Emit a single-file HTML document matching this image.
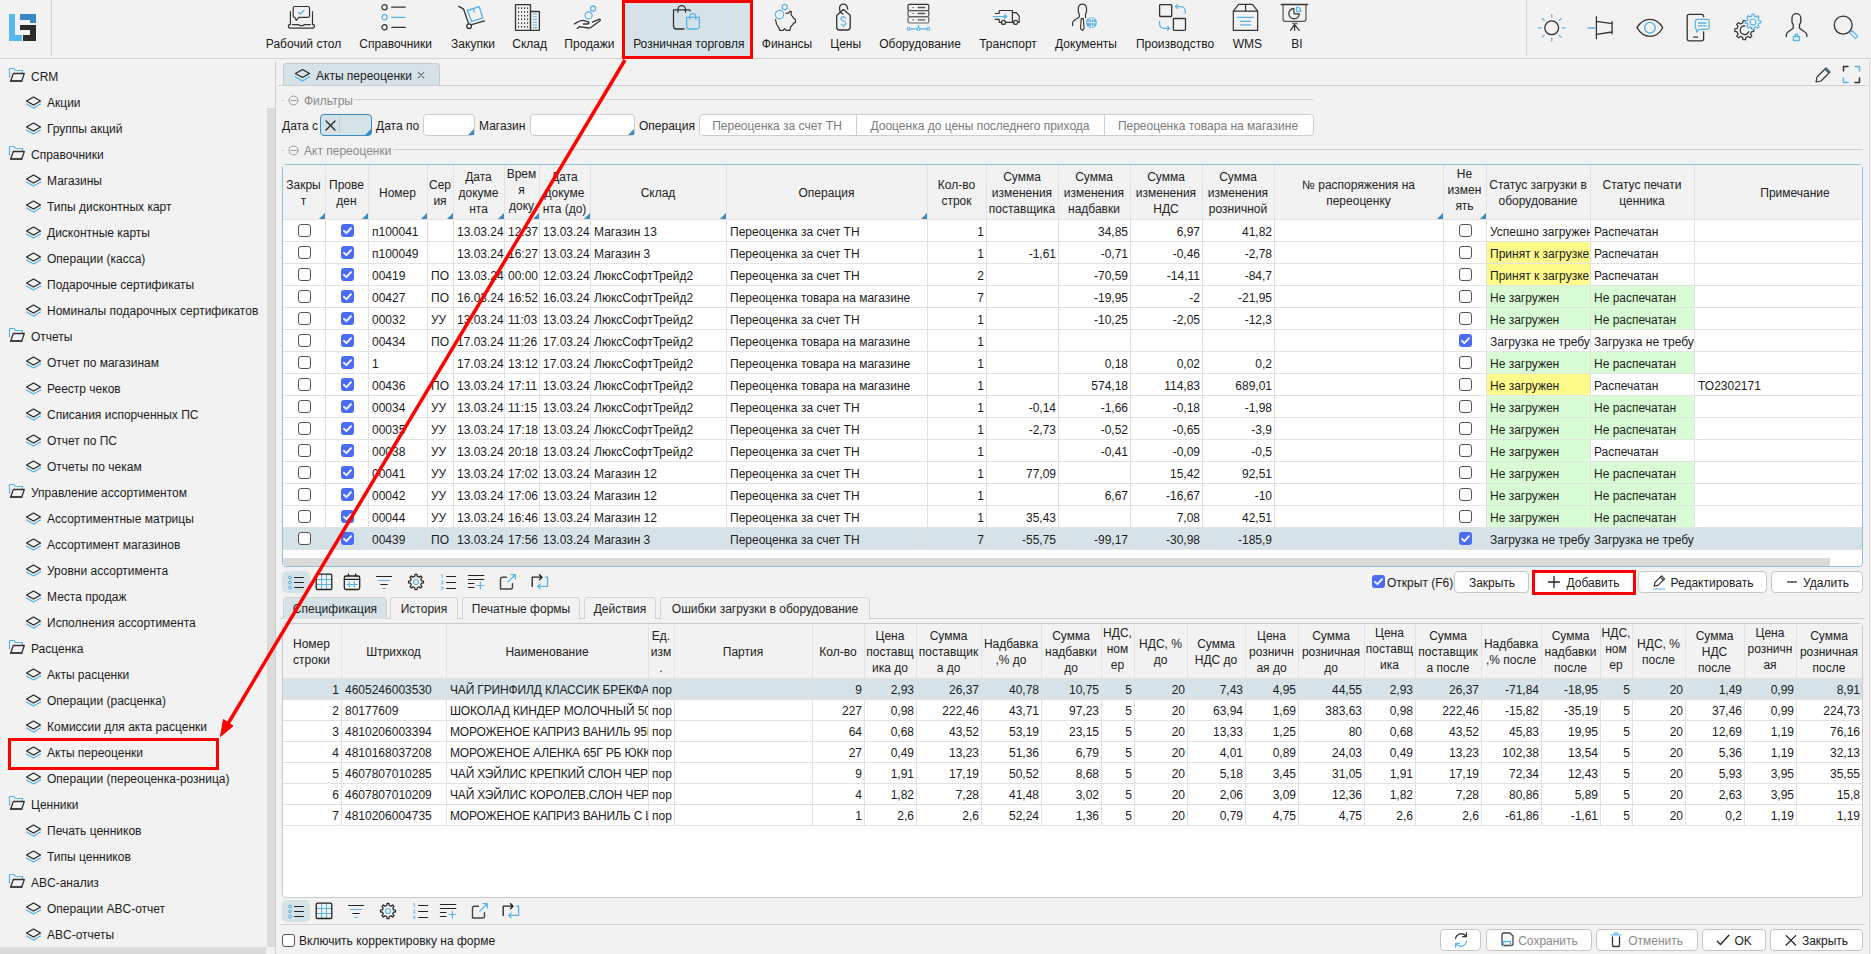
<!DOCTYPE html><html><head><meta charset="utf-8"><style>
*{margin:0;padding:0;box-sizing:border-box}
html,body{width:1871px;height:954px;overflow:hidden;background:#f2f2f2}
body{position:relative;font-family:"Liberation Sans",sans-serif;font-size:12px;color:#1c1c1c}
.a{position:absolute}
.t{position:absolute;white-space:nowrap;line-height:16px}
.c{position:absolute;white-space:nowrap;overflow:hidden;padding:0 0 0 3px}
.r{text-align:right;padding:0 2px 0 3px}
.ctr{text-align:center}
.hd{position:absolute;white-space:normal;text-align:center;line-height:16px;display:flex;align-items:center;justify-content:center;overflow:hidden;color:#222}
.cb{position:absolute;width:13px;height:13px;border:1px solid #555;border-radius:3px;background:#fff}
.cbc{position:absolute;width:13px;height:13px;border-radius:3px;background:#4a6cf7}
.btn{position:absolute;background:#fff;border:1px solid #c6c6c6;border-radius:4px;line-height:19px;text-align:center;white-space:nowrap}
</style></head><body><div class="a" style="left:0px;top:58px;width:1871px;height:1px;background:#d2d2d2"></div><div class="a" style="left:51px;top:0px;width:1px;height:56px;background:#d2d2d2"></div><div class="a" style="left:1526px;top:0px;width:1px;height:56px;background:#d2d2d2"></div><div class="a" style="left:9px;top:14px;width:6px;height:27px;background:#56b8f0"></div><div class="a" style="left:9px;top:35px;width:13px;height:6px;background:#56b8f0"></div><div class="a" style="left:20px;top:14px;width:16px;height:6px;background:#3a86c0"></div><div class="a" style="left:30px;top:20px;width:6px;height:3px;background:#3a86c0"></div><div class="a" style="left:20px;top:25px;width:16px;height:5px;background:#2b2b2b"></div><div class="a" style="left:30px;top:25px;width:6px;height:16px;background:#2b2b2b"></div><div class="a" style="left:23px;top:35px;width:13px;height:6px;background:#2b2b2b"></div><div class="a" style="left:622px;top:0px;width:131px;height:58px;background:#d5e3e8"></div><div class="t" style="left:103.5px;top:36px;width:400px;text-align:center;color:#1a1a1a">Рабочий стол</div><div class="t" style="left:195.60000000000002px;top:36px;width:400px;text-align:center;color:#1a1a1a">Справочники</div><div class="t" style="left:273.0px;top:36px;width:400px;text-align:center;color:#1a1a1a">Закупки</div><div class="t" style="left:329.70000000000005px;top:36px;width:400px;text-align:center;color:#1a1a1a">Склад</div><div class="t" style="left:389.4px;top:36px;width:400px;text-align:center;color:#1a1a1a">Продажи</div><div class="t" style="left:488.79999999999995px;top:36px;width:400px;text-align:center;color:#1a1a1a">Розничная торговля</div><div class="t" style="left:587.0px;top:36px;width:400px;text-align:center;color:#1a1a1a">Финансы</div><div class="t" style="left:645.7px;top:36px;width:400px;text-align:center;color:#1a1a1a">Цены</div><div class="t" style="left:720.0px;top:36px;width:400px;text-align:center;color:#1a1a1a">Оборудование</div><div class="t" style="left:808.0px;top:36px;width:400px;text-align:center;color:#1a1a1a">Транспорт</div><div class="t" style="left:886.0px;top:36px;width:400px;text-align:center;color:#1a1a1a">Документы</div><div class="t" style="left:975.0px;top:36px;width:400px;text-align:center;color:#1a1a1a">Производство</div><div class="t" style="left:1047.4px;top:36px;width:400px;text-align:center;color:#1a1a1a">WMS</div><div class="t" style="left:1096.8px;top:36px;width:400px;text-align:center;color:#1a1a1a">BI</div><svg class="a" style="left:284px;top:2px" width="36" height="30" viewBox="284 2 36 30" fill="none" stroke-linecap="round" stroke-linejoin="round"><g transform="translate(284 2)"><path d="M11 15.4h-0.3a1.5 1.5 0 0 1-1.5-1.5V6a1.5 1.5 0 0 1 1.5-1.5H24a1.5 1.5 0 0 1 1.5 1.5v7.9a1.5 1.5 0 0 1-1.5 1.5H14.8L12.2 18.4z" stroke="#333" stroke-width="1.2" /><path d="M14.5 10.4L16.4 12L20.1 8.3" stroke="#5ab4e8" stroke-width="1.3" /><path d="M6.4 9.6V22.6H5.4a1 1 0 0 0-1 1v0.5a2 2 0 0 0 2 2H28.4a2 2 0 0 0 2-2v-0.5a1 1 0 0 0-1-1H28.5V9.6" stroke="#333" stroke-width="1.2" /><path d="M8.5 22.6H15l1 1h3l1-1H26.4" stroke="#333" stroke-width="1.2" /></g></svg><svg class="a" style="left:378px;top:2px" width="32" height="30" viewBox="378 2 32 30" fill="none" stroke-linecap="round" stroke-linejoin="round"><path d="M384.5 7.2m-2.6 0a2.6 2.6 0 1 0 5.2 0a2.6 2.6 0 1 0-5.2 0" stroke="#333" stroke-width="1.2" /><path d="M384.5 17.3m-2.6 0a2.6 2.6 0 1 0 5.2 0a2.6 2.6 0 1 0-5.2 0" stroke="#5ab4e8" stroke-width="1.2" /><path d="M384.5 27.3m-2.6 0a2.6 2.6 0 1 0 5.2 0a2.6 2.6 0 1 0-5.2 0" stroke="#333" stroke-width="1.2" /><path d="M391.8 7.2H405.2" stroke="#333" stroke-width="1.3" /><path d="M391.8 17.3H405.2" stroke="#5ab4e8" stroke-width="1.3" /><path d="M391.8 27.3H405.2" stroke="#333" stroke-width="1.3" /></svg><svg class="a" style="left:454px;top:2px" width="36" height="30" viewBox="454 2 36 30" fill="none" stroke-linecap="round" stroke-linejoin="round"><g transform="translate(454 2)"><path d="M4.7 4.4L9.4 6.8L14.5 21.4" stroke="#333" stroke-width="1.3" /><circle cx="15.1" cy="24.2" r="2.3" stroke="#333" stroke-width="1.3"/><path d="M17.6 22.6L30.5 18.9" stroke="#333" stroke-width="1.3" /><path d="M13.5 8.5L25.2 4.6L28.8 15.9L17.6 19.7z" stroke="#5ab4e8" stroke-width="1.4" /><path d="M19.5 6.8L20.4 10.2" stroke="#5ab4e8" stroke-width="1.3" /></g></svg><svg class="a" style="left:510px;top:2px" width="36" height="30" viewBox="510 2 36 30" fill="none" stroke-linecap="round" stroke-linejoin="round"><g transform="translate(510 2)"><rect x="5.5" y="2.6" width="15" height="25.8" stroke="#333" stroke-width="1.3" rx="0.5"/><rect x="20.5" y="9.5" width="8.9" height="18.9" stroke="#333" stroke-width="1.3" rx="0.5"/><rect x="8.0" y="5.3" width="1.1" height="1.6" fill="#333"/><rect x="8.0" y="9.1" width="1.1" height="1.6" fill="#333"/><rect x="8.0" y="12.899999999999999" width="1.1" height="1.6" fill="#333"/><rect x="8.0" y="16.5" width="1.1" height="1.6" fill="#333"/><rect x="8.0" y="20.3" width="1.1" height="1.6" fill="#333"/><rect x="8.0" y="24.0" width="1.1" height="1.6" fill="#333"/><rect x="11.0" y="5.3" width="1.1" height="1.6" fill="#333"/><rect x="11.0" y="9.1" width="1.1" height="1.6" fill="#333"/><rect x="11.0" y="12.899999999999999" width="1.1" height="1.6" fill="#333"/><rect x="11.0" y="16.5" width="1.1" height="1.6" fill="#333"/><rect x="11.0" y="20.3" width="1.1" height="1.6" fill="#333"/><rect x="11.0" y="24.0" width="1.1" height="1.6" fill="#333"/><rect x="14.0" y="5.3" width="1.1" height="1.6" fill="#333"/><rect x="14.0" y="9.1" width="1.1" height="1.6" fill="#333"/><rect x="14.0" y="12.899999999999999" width="1.1" height="1.6" fill="#333"/><rect x="14.0" y="16.5" width="1.1" height="1.6" fill="#333"/><rect x="14.0" y="20.3" width="1.1" height="1.6" fill="#333"/><rect x="14.0" y="24.0" width="1.1" height="1.6" fill="#333"/><rect x="17.0" y="5.3" width="1.1" height="1.6" fill="#333"/><rect x="17.0" y="9.1" width="1.1" height="1.6" fill="#333"/><rect x="17.0" y="12.899999999999999" width="1.1" height="1.6" fill="#333"/><rect x="17.0" y="16.5" width="1.1" height="1.6" fill="#333"/><rect x="17.0" y="20.3" width="1.1" height="1.6" fill="#333"/><rect x="17.0" y="24.0" width="1.1" height="1.6" fill="#333"/><path d="M23.4 12H26.6" stroke="#5ab4e8" stroke-width="1.1" /><path d="M23.4 14.8H26.6" stroke="#5ab4e8" stroke-width="1.1" /><path d="M23.4 17.5H26.6" stroke="#5ab4e8" stroke-width="1.1" /><path d="M23.4 20.3H26.6" stroke="#5ab4e8" stroke-width="1.1" /><path d="M23.4 23H26.6" stroke="#5ab4e8" stroke-width="1.1" /><path d="M23.4 25.6H26.6" stroke="#5ab4e8" stroke-width="1.1" /></g></svg><svg class="a" style="left:570px;top:2px" width="36" height="30" viewBox="570 2 36 30" fill="none" stroke-linecap="round" stroke-linejoin="round"><g transform="translate(570 2)"><circle cx="23.1" cy="6.6" r="2.6" stroke="#5ab4e8" stroke-width="1.3"/><circle cx="18.6" cy="13.4" r="3.5" stroke="#5ab4e8" stroke-width="1.3"/><path d="M4.4 22C7.5 20 10 18.4 12.6 18.4C14.5 18.4 16 19.5 18.5 20C19.5 20.3 19 22 17.5 22H13.5" stroke="#333" stroke-width="1.3" /><path d="M22.3 20.1L28.9 17.3C30 17 30.8 18 30 18.8L20.8 25.5C20 26.1 19 26.2 18 26L9.6 24.6L7.2 26.4" stroke="#333" stroke-width="1.3" /></g></svg><svg class="a" style="left:668px;top:2px" width="36" height="30" viewBox="668 2 36 30" fill="none" stroke-linecap="round" stroke-linejoin="round"><g transform="translate(668 2)"><path d="M16 27H8.5a3 3 0 0 1-3-3V7.9H21.7L22.3 9" stroke="#333" stroke-width="1.3" /><path d="M9.9 10.2V7.5a3.8 3.8 0 0 1 7.6 0v2.7" stroke="#333" stroke-width="1.3" /><path d="M18.6 15.4H31.4V24a3 3 0 0 1-3 3H21.6a3 3 0 0 1-3-3z" stroke="#5ab4e8" stroke-width="1.3" /><path d="M21.8 17.2V14.6a3 3 0 0 1 6 0v2.6" stroke="#5ab4e8" stroke-width="1.3" /></g></svg><svg class="a" style="left:768px;top:2px" width="36" height="30" viewBox="768 2 36 30" fill="none" stroke-linecap="round" stroke-linejoin="round"><g transform="translate(768 2)"><circle cx="16.7" cy="5" r="2.6" stroke="#5ab4e8" stroke-width="1.2"/><circle cx="11.5" cy="12.6" r="4.2" stroke="#5ab4e8" stroke-width="1.2"/><path d="M7.5 17.6C7.6 20 8.2 22.6 11 26L11.6 28.3H15.1L16.7 26.7L18.2 28.3H22L22.6 25.2L25.8 21.1L27.4 20.4V17.3L25.8 16.4L23 12.6L23.3 9.7L22 9.4L20.1 11.3L17.9 11" stroke="#333" stroke-width="1.2" /></g></svg><svg class="a" style="left:826px;top:2px" width="36" height="30" viewBox="826 2 36 30" fill="none" stroke-linecap="round" stroke-linejoin="round"><g transform="translate(826 2)"><path d="M10.7 13.5L17.5 7.4L24.2 13.2V25.2a2.8 2.8 0 0 1-2.8 2.8H13.5a2.8 2.8 0 0 1-2.8-2.8z" stroke="#333" stroke-width="1.3" /><path d="M17.1 11.9C15 11.5 13.6 9.5 13.5 6.3C13.6 3.5 15.4 2.2 17.5 2.2C19.8 2.2 21.5 4.3 21.7 7.2" stroke="#333" stroke-width="1.3" /><path d="M19.5 16.2C19 15.2 18.2 14.8 17.3 14.8C16 14.8 15 15.6 15 16.8C15 19.5 19.8 18.5 19.8 21.3C19.8 22.5 18.8 23.4 17.4 23.4C16.4 23.4 15.6 23 15.2 22.3M17.5 14.2V15M17.5 23.4V24.6" stroke="#5ab4e8" stroke-width="1.2" /></g></svg><svg class="a" style="left:900px;top:2px" width="36" height="30" viewBox="900 2 36 30" fill="none" stroke-linecap="round" stroke-linejoin="round"><g transform="translate(900 2)"><rect x="8" y="2.3" width="20.8" height="6.3" rx="1.5" stroke="#333" stroke-width="1.2"/><rect x="8" y="8.5" width="20.8" height="6.1" rx="1.5" stroke="#555" stroke-width="1.2"/><rect x="8" y="14.6" width="20.8" height="6.4" rx="1.5" stroke="#666" stroke-width="1.2"/><path d="M13 5.5h0.5M13 11.5h0.5M13 17.8h0.5" stroke="#555" stroke-width="1.2" /><path d="M18.1 5.5H24.7M18.1 11.5H24.7M18.1 17.8H24.7" stroke="#555" stroke-width="1.3" /><path d="M10 26.9H17.1M19.9 26.9H27" stroke="#5ab4e8" stroke-width="1.1" /><path d="M18.5 23.3V25.5" stroke="#5ab4e8" stroke-width="1.1" /><circle cx="8.6" cy="26.9" r="1.4" stroke="#5ab4e8" stroke-width="1.1"/><circle cx="18.5" cy="26.9" r="1.4" stroke="#5ab4e8" stroke-width="1.1"/><circle cx="28.3" cy="26.9" r="1.4" stroke="#5ab4e8" stroke-width="1.1"/></g></svg><svg class="a" style="left:989px;top:2px" width="36" height="30" viewBox="989 2 36 30" fill="none" stroke-linecap="round" stroke-linejoin="round"><g transform="translate(989 2)"><path d="M6.3 11.5H10.1L10.4 8.5H23.4V20.4" stroke="#333" stroke-width="1.2" /><path d="M6.3 17.3H10.1L10.4 20.4H12.4M16.6 20.4H24.7M23.6 10.7H27.4L30.2 14.2V20.4H28.6" stroke="#333" stroke-width="1.2" /><circle cx="14.5" cy="20.4" r="2" stroke="#333" stroke-width="1.2"/><circle cx="26.6" cy="20.4" r="2" stroke="#333" stroke-width="1.2"/><path d="M4.4 14.6H16" stroke="#5ab4e8" stroke-width="1.4" /><path d="M15.7 12.4L18.3 14.6L15.7 16.8z" fill="#5ab4e8" stroke="#5ab4e8" stroke-width="0.8" stroke-linejoin="round"/></g></svg><svg class="a" style="left:1067px;top:2px" width="36" height="30" viewBox="1067 2 36 30" fill="none" stroke-linecap="round" stroke-linejoin="round"><g transform="translate(1067 2)"><path d="M18.5 15.4V12L19.5 10V5.9C19.5 3.7 17.6 2.2 15.4 2.2C13.2 2.2 11.3 3.7 11.3 5.9V10.4L12.3 12V15.1L11 16C8.5 17.5 5.7 18.8 5.6 21V23.6" stroke="#333" stroke-width="1.2" /><path d="M14.2 16.6L13.5 26.7L15.4 28.5L17 26.7L16.4 16.6z" stroke="#333" stroke-width="1.1" /><circle cx="24.5" cy="20.6" r="5.6" fill="#5ab4e8"/><path d="M19 20.6H30M24.5 15V26.2M21.5 16.5C23 17.5 26 17.5 27.5 16.5M21.5 24.7C23 23.7 26 23.7 27.5 24.7M22 20.6C22 18 23 16 24.5 15.2C26 16 27 18 27 20.6C27 23.2 26 25.2 24.5 26" stroke="#f2f2f2" stroke-width="0.7" /></g></svg><svg class="a" style="left:1155px;top:2px" width="36" height="30" viewBox="1155 2 36 30" fill="none" stroke-linecap="round" stroke-linejoin="round"><g transform="translate(1155 2)"><rect x="4.6" y="2.7" width="12.1" height="11.8" rx="0.8" stroke="#333" stroke-width="1.3"/><rect x="18.4" y="16.5" width="12.1" height="11.8" rx="0.8" stroke="#333" stroke-width="1.3"/><path d="M30.3 11.3V9A4.5 4.5 0 0 0 25.8 4.6H21M22.6 2.6L20.5 4.6L22.6 6.6" stroke="#5ab4e8" stroke-width="1.3" /><path d="M4.6 19.2V22A4.4 4.4 0 0 0 9 26.4H14M12.6 24.4L14.6 26.4L12.6 28.4" stroke="#5ab4e8" stroke-width="1.3" /></g></svg><svg class="a" style="left:1227px;top:2px" width="36" height="30" viewBox="1227 2 36 30" fill="none" stroke-linecap="round" stroke-linejoin="round"><g transform="translate(1227 2)"><path d="M6.3 9.1L11.6 2.4H25.5L30.7 9.1V28.3H6.3zM6.3 9.1H30.7M18.6 2.4V9.1" stroke="#333" stroke-width="1.2" /><path d="M10.4 15.4H26.6M13.4 19.3H23.7M13.4 22.8H23.7" stroke="#5ab4e8" stroke-width="1.3" /></g></svg><svg class="a" style="left:1276px;top:2px" width="36" height="30" viewBox="1276 2 36 30" fill="none" stroke-linecap="round" stroke-linejoin="round"><g transform="translate(1276 2)"><path d="M5.3 2.4H31.6" stroke="#333" stroke-width="1.5" /><path d="M7.1 2.8V17.3a2 2 0 0 0 2 2H28a2 2 0 0 0 2-2V2.8" stroke="#555" stroke-width="1.2" /><rect x="16" y="20.6" width="5.7" height="1.8" fill="#777"/><path d="M18.6 22.6L14.5 28.3M18.6 22.6L23.3 28.3M18.6 22.6V28.3" stroke="#333" stroke-width="1.2" /><path d="M17.8 6.3A5.3 5.3 0 1 0 23.4 11.8H18.1z" stroke="#333" stroke-width="1.2" /><path d="M20.6 5A4.3 4.3 0 0 1 24.9 9.3H20.6z" stroke="#5ab4e8" stroke-width="1.2" /></g></svg><svg class="a" style="left:1534px;top:10px" width="36" height="36" viewBox="1534 10 36 36" fill="none" stroke-linecap="round" stroke-linejoin="round"><circle cx="1551.7" cy="27.8" r="6.9" stroke="#333" stroke-width="1.3"/><path d="M1562.40 27.80L1564.90 27.80" stroke="#5ab4e8" stroke-width="1.3" /><path d="M1541.00 27.80L1538.50 27.80" stroke="#5ab4e8" stroke-width="1.3" /><path d="M1551.70 38.50L1551.70 41.00" stroke="#5ab4e8" stroke-width="1.3" /><path d="M1551.70 17.10L1551.70 14.60" stroke="#5ab4e8" stroke-width="1.3" /><path d="M1559.26 35.36L1561.03 37.13" stroke="#5ab4e8" stroke-width="1.3" /><path d="M1544.14 35.36L1542.37 37.13" stroke="#5ab4e8" stroke-width="1.3" /><path d="M1559.26 20.24L1561.03 18.47" stroke="#5ab4e8" stroke-width="1.3" /><path d="M1544.14 20.24L1542.37 18.47" stroke="#5ab4e8" stroke-width="1.3" /></svg><svg class="a" style="left:1584px;top:12px" width="32" height="32" viewBox="1584 12 32 32" fill="none" stroke-linecap="round" stroke-linejoin="round"><path d="M1596.4 16.7V38.7M1596.4 21.3L1612.1 23.7M1596.4 34.4L1612.1 32M1612.1 21.6V33.8" stroke="#333" stroke-width="1.3" /><path d="M1588 27.9H1594.5" stroke="#5ab4e8" stroke-width="1.5" /></svg><svg class="a" style="left:1632px;top:12px" width="34" height="32" viewBox="1632 12 34 32" fill="none" stroke-linecap="round" stroke-linejoin="round"><path d="M1636.9 27.7C1640 22.5 1645 19.4 1649.9 19.4C1654.8 19.4 1659.8 22.5 1662.8 27.7C1659.8 32.9 1654.8 36.4 1649.9 36.4C1645 36.4 1640 32.9 1636.9 27.7z" stroke="#333" stroke-width="1.3" /><circle cx="1649.9" cy="27.7" r="5.3" stroke="#5ab4e8" stroke-width="1.4"/></svg><svg class="a" style="left:1684px;top:12px" width="28" height="32" viewBox="1684 12 28 32" fill="none" stroke-linecap="round" stroke-linejoin="round"><path d="M1703.6 16.7V16.3a2 2 0 0 0-2-2H1689.2a2 2 0 0 0-2 2V38.8a2 2 0 0 0 2 2H1701.6a2 2 0 0 0 2-2V31.8" stroke="#333" stroke-width="1.3" /><path d="M1693.6 37.2H1697.6" stroke="#333" stroke-width="1.3" /><path d="M1697.3 19.4H1707.2a2 2 0 0 1 2 2V27.3a2 2 0 0 1-2 2H1699.2L1696.5 32.2V29.3a2 2 0 0 1-1.2-2V21.4a2 2 0 0 1 2-2z" stroke="#5ab4e8" stroke-width="1.2" /><path d="M1698.5 23H1706M1698.5 25.9H1706" stroke="#5ab4e8" stroke-width="1.4" /></svg><svg class="a" style="left:1729px;top:10px" width="36" height="36" viewBox="1729 10 36 36" fill="none" stroke-linecap="round" stroke-linejoin="round"><path d="M1751.52 28.59L1753.82 28.96L1753.82 31.44L1751.52 31.81L1750.55 34.16L1751.91 36.05L1750.15 37.81L1748.26 36.45L1745.91 37.42L1745.54 39.72L1743.06 39.72L1742.69 37.42L1740.34 36.45L1738.45 37.81L1736.69 36.05L1738.05 34.16L1737.08 31.81L1734.78 31.44L1734.78 28.96L1737.08 28.59L1738.05 26.24L1736.69 24.35L1738.45 22.59L1740.34 23.95L1742.69 22.98L1743.06 20.68L1745.54 20.68L1745.91 22.98L1748.26 23.95L1750.15 22.59L1751.91 24.35L1750.55 26.24z" stroke="#333" stroke-width="1.2" fill="#f2f2f2"/><path d="M1748.7 31.5A4.3 4.3 0 1 1 1744.9 25.9" stroke="#333" stroke-width="1.2" /><path d="M1758.76 20.61L1760.73 20.89L1760.73 22.91L1758.76 23.19L1757.98 25.06L1759.18 26.65L1757.75 28.08L1756.16 26.88L1754.29 27.66L1754.01 29.63L1751.99 29.63L1751.71 27.66L1749.84 26.88L1748.25 28.08L1746.82 26.65L1748.02 25.06L1747.24 23.19L1745.27 22.91L1745.27 20.89L1747.24 20.61L1748.02 18.74L1746.82 17.15L1748.25 15.72L1749.84 16.92L1751.71 16.14L1751.99 14.17L1754.01 14.17L1754.29 16.14L1756.16 16.92L1757.75 15.72L1759.18 17.15L1757.98 18.74z" stroke="#5ab4e8" stroke-width="1.2" fill="#f2f2f2"/><circle cx="1753" cy="21.9" r="2.9" stroke="#5ab4e8" stroke-width="1.2"/></svg><svg class="a" style="left:1782px;top:10px" width="32" height="36" viewBox="1782 10 32 36" fill="none" stroke-linecap="round" stroke-linejoin="round"><path d="M1786.3 36.5V35C1786.3 33.5 1787 32.5 1788 32L1793.2 28.3V24.4L1792 22.5V18.1A4.4 4.4 0 0 1 1800.8 18.1V22.5L1799.5 24.4V28.3L1804.8 32C1805.8 32.5 1806.9 33.5 1806.9 35V36.5" stroke="#333" stroke-width="1.3" /><path d="M1793.4 36.5H1799.5V40.5H1793.4z" stroke="#5ab4e8" stroke-width="1.3" /><path d="M1795.2 36.5V35a1.2 1.2 0 0 1 2.4 0V36.5" stroke="#5ab4e8" stroke-width="1.3" /></svg><svg class="a" style="left:1830px;top:12px" width="32" height="32" viewBox="1830 12 32 32" fill="none" stroke-linecap="round" stroke-linejoin="round"><circle cx="1843.2" cy="25.1" r="9" stroke="#333" stroke-width="1.3"/><path d="M1849.6 32.6L1851.8 30.4L1857.8 36.4L1855.6 38.6z" stroke="#5ab4e8" stroke-width="1.3" /></svg><svg class="a" style="left:8px;top:67px" width="18" height="16" viewBox="0 0 18 16" fill="none" stroke-linecap="round" stroke-linejoin="round"><path d="M1.5 10V1.5h4.5l1.5 2h7v2.5" stroke="#5ab4e8" stroke-width="1.2"/><path d="M5.3 6.5h11l-2.6 7.5h-11z" stroke="#333" stroke-width="1.3"/><path d="M2.7 14h11" stroke="#444" stroke-width="1.8"/></svg><div class="t" style="left:31px;top:69px;">CRM</div><svg class="a" style="left:24.5px;top:96px" width="17" height="14" viewBox="0 0 17 14" fill="none" stroke-linecap="round" stroke-linejoin="round"><path d="M8.5 1l7 4-7 4-7-4z" stroke="#222" stroke-width="1.2"/><path d="M1.5 8l7 4 7-4" stroke="#5ab4e8" stroke-width="1.4"/></svg><div class="t" style="left:47px;top:95px;">Акции</div><svg class="a" style="left:24.5px;top:122px" width="17" height="14" viewBox="0 0 17 14" fill="none" stroke-linecap="round" stroke-linejoin="round"><path d="M8.5 1l7 4-7 4-7-4z" stroke="#222" stroke-width="1.2"/><path d="M1.5 8l7 4 7-4" stroke="#5ab4e8" stroke-width="1.4"/></svg><div class="t" style="left:47px;top:121px;">Группы акций</div><svg class="a" style="left:8px;top:145px" width="18" height="16" viewBox="0 0 18 16" fill="none" stroke-linecap="round" stroke-linejoin="round"><path d="M1.5 10V1.5h4.5l1.5 2h7v2.5" stroke="#5ab4e8" stroke-width="1.2"/><path d="M5.3 6.5h11l-2.6 7.5h-11z" stroke="#333" stroke-width="1.3"/><path d="M2.7 14h11" stroke="#444" stroke-width="1.8"/></svg><div class="t" style="left:31px;top:147px;">Справочники</div><svg class="a" style="left:24.5px;top:174px" width="17" height="14" viewBox="0 0 17 14" fill="none" stroke-linecap="round" stroke-linejoin="round"><path d="M8.5 1l7 4-7 4-7-4z" stroke="#222" stroke-width="1.2"/><path d="M1.5 8l7 4 7-4" stroke="#5ab4e8" stroke-width="1.4"/></svg><div class="t" style="left:47px;top:173px;">Магазины</div><svg class="a" style="left:24.5px;top:200px" width="17" height="14" viewBox="0 0 17 14" fill="none" stroke-linecap="round" stroke-linejoin="round"><path d="M8.5 1l7 4-7 4-7-4z" stroke="#222" stroke-width="1.2"/><path d="M1.5 8l7 4 7-4" stroke="#5ab4e8" stroke-width="1.4"/></svg><div class="t" style="left:47px;top:199px;">Типы дисконтных карт</div><svg class="a" style="left:24.5px;top:226px" width="17" height="14" viewBox="0 0 17 14" fill="none" stroke-linecap="round" stroke-linejoin="round"><path d="M8.5 1l7 4-7 4-7-4z" stroke="#222" stroke-width="1.2"/><path d="M1.5 8l7 4 7-4" stroke="#5ab4e8" stroke-width="1.4"/></svg><div class="t" style="left:47px;top:225px;">Дисконтные карты</div><svg class="a" style="left:24.5px;top:252px" width="17" height="14" viewBox="0 0 17 14" fill="none" stroke-linecap="round" stroke-linejoin="round"><path d="M8.5 1l7 4-7 4-7-4z" stroke="#222" stroke-width="1.2"/><path d="M1.5 8l7 4 7-4" stroke="#5ab4e8" stroke-width="1.4"/></svg><div class="t" style="left:47px;top:251px;">Операции (касса)</div><svg class="a" style="left:24.5px;top:278px" width="17" height="14" viewBox="0 0 17 14" fill="none" stroke-linecap="round" stroke-linejoin="round"><path d="M8.5 1l7 4-7 4-7-4z" stroke="#222" stroke-width="1.2"/><path d="M1.5 8l7 4 7-4" stroke="#5ab4e8" stroke-width="1.4"/></svg><div class="t" style="left:47px;top:277px;">Подарочные сертификаты</div><svg class="a" style="left:24.5px;top:304px" width="17" height="14" viewBox="0 0 17 14" fill="none" stroke-linecap="round" stroke-linejoin="round"><path d="M8.5 1l7 4-7 4-7-4z" stroke="#222" stroke-width="1.2"/><path d="M1.5 8l7 4 7-4" stroke="#5ab4e8" stroke-width="1.4"/></svg><div class="t" style="left:47px;top:303px;">Номиналы подарочных сертификатов</div><svg class="a" style="left:8px;top:327px" width="18" height="16" viewBox="0 0 18 16" fill="none" stroke-linecap="round" stroke-linejoin="round"><path d="M1.5 10V1.5h4.5l1.5 2h7v2.5" stroke="#5ab4e8" stroke-width="1.2"/><path d="M5.3 6.5h11l-2.6 7.5h-11z" stroke="#333" stroke-width="1.3"/><path d="M2.7 14h11" stroke="#444" stroke-width="1.8"/></svg><div class="t" style="left:31px;top:329px;">Отчеты</div><svg class="a" style="left:24.5px;top:356px" width="17" height="14" viewBox="0 0 17 14" fill="none" stroke-linecap="round" stroke-linejoin="round"><path d="M8.5 1l7 4-7 4-7-4z" stroke="#222" stroke-width="1.2"/><path d="M1.5 8l7 4 7-4" stroke="#5ab4e8" stroke-width="1.4"/></svg><div class="t" style="left:47px;top:355px;">Отчет по магазинам</div><svg class="a" style="left:24.5px;top:382px" width="17" height="14" viewBox="0 0 17 14" fill="none" stroke-linecap="round" stroke-linejoin="round"><path d="M8.5 1l7 4-7 4-7-4z" stroke="#222" stroke-width="1.2"/><path d="M1.5 8l7 4 7-4" stroke="#5ab4e8" stroke-width="1.4"/></svg><div class="t" style="left:47px;top:381px;">Реестр чеков</div><svg class="a" style="left:24.5px;top:408px" width="17" height="14" viewBox="0 0 17 14" fill="none" stroke-linecap="round" stroke-linejoin="round"><path d="M8.5 1l7 4-7 4-7-4z" stroke="#222" stroke-width="1.2"/><path d="M1.5 8l7 4 7-4" stroke="#5ab4e8" stroke-width="1.4"/></svg><div class="t" style="left:47px;top:407px;">Списания испорченных ПС</div><svg class="a" style="left:24.5px;top:434px" width="17" height="14" viewBox="0 0 17 14" fill="none" stroke-linecap="round" stroke-linejoin="round"><path d="M8.5 1l7 4-7 4-7-4z" stroke="#222" stroke-width="1.2"/><path d="M1.5 8l7 4 7-4" stroke="#5ab4e8" stroke-width="1.4"/></svg><div class="t" style="left:47px;top:433px;">Отчет по ПС</div><svg class="a" style="left:24.5px;top:460px" width="17" height="14" viewBox="0 0 17 14" fill="none" stroke-linecap="round" stroke-linejoin="round"><path d="M8.5 1l7 4-7 4-7-4z" stroke="#222" stroke-width="1.2"/><path d="M1.5 8l7 4 7-4" stroke="#5ab4e8" stroke-width="1.4"/></svg><div class="t" style="left:47px;top:459px;">Отчеты по чекам</div><svg class="a" style="left:8px;top:483px" width="18" height="16" viewBox="0 0 18 16" fill="none" stroke-linecap="round" stroke-linejoin="round"><path d="M1.5 10V1.5h4.5l1.5 2h7v2.5" stroke="#5ab4e8" stroke-width="1.2"/><path d="M5.3 6.5h11l-2.6 7.5h-11z" stroke="#333" stroke-width="1.3"/><path d="M2.7 14h11" stroke="#444" stroke-width="1.8"/></svg><div class="t" style="left:31px;top:485px;">Управление ассортиментом</div><svg class="a" style="left:24.5px;top:512px" width="17" height="14" viewBox="0 0 17 14" fill="none" stroke-linecap="round" stroke-linejoin="round"><path d="M8.5 1l7 4-7 4-7-4z" stroke="#222" stroke-width="1.2"/><path d="M1.5 8l7 4 7-4" stroke="#5ab4e8" stroke-width="1.4"/></svg><div class="t" style="left:47px;top:511px;">Ассортиментные матрицы</div><svg class="a" style="left:24.5px;top:538px" width="17" height="14" viewBox="0 0 17 14" fill="none" stroke-linecap="round" stroke-linejoin="round"><path d="M8.5 1l7 4-7 4-7-4z" stroke="#222" stroke-width="1.2"/><path d="M1.5 8l7 4 7-4" stroke="#5ab4e8" stroke-width="1.4"/></svg><div class="t" style="left:47px;top:537px;">Ассортимент магазинов</div><svg class="a" style="left:24.5px;top:564px" width="17" height="14" viewBox="0 0 17 14" fill="none" stroke-linecap="round" stroke-linejoin="round"><path d="M8.5 1l7 4-7 4-7-4z" stroke="#222" stroke-width="1.2"/><path d="M1.5 8l7 4 7-4" stroke="#5ab4e8" stroke-width="1.4"/></svg><div class="t" style="left:47px;top:563px;">Уровни ассортимента</div><svg class="a" style="left:24.5px;top:590px" width="17" height="14" viewBox="0 0 17 14" fill="none" stroke-linecap="round" stroke-linejoin="round"><path d="M8.5 1l7 4-7 4-7-4z" stroke="#222" stroke-width="1.2"/><path d="M1.5 8l7 4 7-4" stroke="#5ab4e8" stroke-width="1.4"/></svg><div class="t" style="left:47px;top:589px;">Места продаж</div><svg class="a" style="left:24.5px;top:616px" width="17" height="14" viewBox="0 0 17 14" fill="none" stroke-linecap="round" stroke-linejoin="round"><path d="M8.5 1l7 4-7 4-7-4z" stroke="#222" stroke-width="1.2"/><path d="M1.5 8l7 4 7-4" stroke="#5ab4e8" stroke-width="1.4"/></svg><div class="t" style="left:47px;top:615px;">Исполнения ассортимента</div><svg class="a" style="left:8px;top:639px" width="18" height="16" viewBox="0 0 18 16" fill="none" stroke-linecap="round" stroke-linejoin="round"><path d="M1.5 10V1.5h4.5l1.5 2h7v2.5" stroke="#5ab4e8" stroke-width="1.2"/><path d="M5.3 6.5h11l-2.6 7.5h-11z" stroke="#333" stroke-width="1.3"/><path d="M2.7 14h11" stroke="#444" stroke-width="1.8"/></svg><div class="t" style="left:31px;top:641px;">Расценка</div><svg class="a" style="left:24.5px;top:668px" width="17" height="14" viewBox="0 0 17 14" fill="none" stroke-linecap="round" stroke-linejoin="round"><path d="M8.5 1l7 4-7 4-7-4z" stroke="#222" stroke-width="1.2"/><path d="M1.5 8l7 4 7-4" stroke="#5ab4e8" stroke-width="1.4"/></svg><div class="t" style="left:47px;top:667px;">Акты расценки</div><svg class="a" style="left:24.5px;top:694px" width="17" height="14" viewBox="0 0 17 14" fill="none" stroke-linecap="round" stroke-linejoin="round"><path d="M8.5 1l7 4-7 4-7-4z" stroke="#222" stroke-width="1.2"/><path d="M1.5 8l7 4 7-4" stroke="#5ab4e8" stroke-width="1.4"/></svg><div class="t" style="left:47px;top:693px;">Операции (расценка)</div><svg class="a" style="left:24.5px;top:720px" width="17" height="14" viewBox="0 0 17 14" fill="none" stroke-linecap="round" stroke-linejoin="round"><path d="M8.5 1l7 4-7 4-7-4z" stroke="#222" stroke-width="1.2"/><path d="M1.5 8l7 4 7-4" stroke="#5ab4e8" stroke-width="1.4"/></svg><div class="t" style="left:47px;top:719px;">Комиссии для акта расценки</div><svg class="a" style="left:24.5px;top:746px" width="17" height="14" viewBox="0 0 17 14" fill="none" stroke-linecap="round" stroke-linejoin="round"><path d="M8.5 1l7 4-7 4-7-4z" stroke="#222" stroke-width="1.2"/><path d="M1.5 8l7 4 7-4" stroke="#5ab4e8" stroke-width="1.4"/></svg><div class="t" style="left:47px;top:745px;">Акты переоценки</div><svg class="a" style="left:24.5px;top:772px" width="17" height="14" viewBox="0 0 17 14" fill="none" stroke-linecap="round" stroke-linejoin="round"><path d="M8.5 1l7 4-7 4-7-4z" stroke="#222" stroke-width="1.2"/><path d="M1.5 8l7 4 7-4" stroke="#5ab4e8" stroke-width="1.4"/></svg><div class="t" style="left:47px;top:771px;">Операции (переоценка-розница)</div><svg class="a" style="left:8px;top:795px" width="18" height="16" viewBox="0 0 18 16" fill="none" stroke-linecap="round" stroke-linejoin="round"><path d="M1.5 10V1.5h4.5l1.5 2h7v2.5" stroke="#5ab4e8" stroke-width="1.2"/><path d="M5.3 6.5h11l-2.6 7.5h-11z" stroke="#333" stroke-width="1.3"/><path d="M2.7 14h11" stroke="#444" stroke-width="1.8"/></svg><div class="t" style="left:31px;top:797px;">Ценники</div><svg class="a" style="left:24.5px;top:824px" width="17" height="14" viewBox="0 0 17 14" fill="none" stroke-linecap="round" stroke-linejoin="round"><path d="M8.5 1l7 4-7 4-7-4z" stroke="#222" stroke-width="1.2"/><path d="M1.5 8l7 4 7-4" stroke="#5ab4e8" stroke-width="1.4"/></svg><div class="t" style="left:47px;top:823px;">Печать ценников</div><svg class="a" style="left:24.5px;top:850px" width="17" height="14" viewBox="0 0 17 14" fill="none" stroke-linecap="round" stroke-linejoin="round"><path d="M8.5 1l7 4-7 4-7-4z" stroke="#222" stroke-width="1.2"/><path d="M1.5 8l7 4 7-4" stroke="#5ab4e8" stroke-width="1.4"/></svg><div class="t" style="left:47px;top:849px;">Типы ценников</div><svg class="a" style="left:8px;top:873px" width="18" height="16" viewBox="0 0 18 16" fill="none" stroke-linecap="round" stroke-linejoin="round"><path d="M1.5 10V1.5h4.5l1.5 2h7v2.5" stroke="#5ab4e8" stroke-width="1.2"/><path d="M5.3 6.5h11l-2.6 7.5h-11z" stroke="#333" stroke-width="1.3"/><path d="M2.7 14h11" stroke="#444" stroke-width="1.8"/></svg><div class="t" style="left:31px;top:875px;">ABC-анализ</div><svg class="a" style="left:24.5px;top:902px" width="17" height="14" viewBox="0 0 17 14" fill="none" stroke-linecap="round" stroke-linejoin="round"><path d="M8.5 1l7 4-7 4-7-4z" stroke="#222" stroke-width="1.2"/><path d="M1.5 8l7 4 7-4" stroke="#5ab4e8" stroke-width="1.4"/></svg><div class="t" style="left:47px;top:901px;">Операции ABC-отчет</div><svg class="a" style="left:24.5px;top:928px" width="17" height="14" viewBox="0 0 17 14" fill="none" stroke-linecap="round" stroke-linejoin="round"><path d="M8.5 1l7 4-7 4-7-4z" stroke="#222" stroke-width="1.2"/><path d="M1.5 8l7 4 7-4" stroke="#5ab4e8" stroke-width="1.4"/></svg><div class="t" style="left:47px;top:927px;">ABC-отчеты</div><div class="a" style="left:267px;top:108px;width:8px;height:839px;background:#dadada"></div><div class="a" style="left:0px;top:947px;width:266px;height:7px;background:#dadada"></div><div class="a" style="left:275px;top:61px;width:1px;height:893px;background:#cfcfcf"></div><div class="a" style="left:283px;top:63px;width:157px;height:23px;background:#d5e3e8;border:1px solid #cbcbcb;border-bottom:none;border-radius:4px 4px 0 0"></div><div class="a" style="left:278px;top:85px;width:1589px;height:1px;background:#cfcfcf"></div><svg class="a" style="left:294px;top:68px" width="17" height="16" viewBox="0 0 17 16" fill="none" stroke-linecap="round" stroke-linejoin="round"><path d="M8.5 1.5l7 4-7 4-7-4z" stroke="#222" stroke-width="1.2"/><path d="M1.5 9l7 4 7-4" stroke="#5ab4e8" stroke-width="1.4"/></svg><div class="t" style="left:316px;top:68px;">Акты переоценки</div><svg class="a" style="left:414px;top:68px" width="14" height="14" viewBox="414 68 14 14" fill="none" stroke-linecap="round" stroke-linejoin="round"><path d="M418.2 72.3L423.8 77.9M423.8 72.3L418.2 77.9" stroke="#6a6a6a" stroke-width="1.1" /></svg><svg class="a" style="left:1813px;top:65px" width="20" height="19" viewBox="0 0 20 19" fill="none" stroke-linecap="round" stroke-linejoin="round"><path d="M3 17l1-5 9-9 4 4-9 9z M12 4l4 4" stroke="#333" stroke-width="1.2"/><path d="M13 3.5l3.5 3.5" stroke="#5ab4e8" stroke-width="1"/></svg><svg class="a" style="left:1842px;top:65px" width="19" height="19" viewBox="0 0 19 19" fill="none" stroke-linecap="round" stroke-linejoin="round"><path d="M1.5 6V1.5H6 M13 17.5h4.5V13" stroke="#333" stroke-width="1.5"/><path d="M13 1.5h4.5V6 M1.5 13v4.5H6" stroke="#5ab4e8" stroke-width="1.5"/></svg><div class="a" style="left:1869px;top:60px;width:1px;height:894px;background:#d8d8d8"></div><div class="a" style="left:282px;top:100px;width:2px;height:1px;background:#c4c4c4"></div><svg class="a" style="left:288px;top:95px" width="11" height="11" viewBox="0 0 11 11" fill="none" stroke-linecap="round" stroke-linejoin="round"><circle cx="5.5" cy="5.5" r="4.5" stroke="#999" stroke-width="1"/><path d="M3 5.5h5" stroke="#999" stroke-width="1"/></svg><div class="t" style="left:304px;top:93px;color:#8a8a8a">Фильтры</div><div class="a" style="left:354px;top:99px;width:959px;height:1px;background:#d0d0d0"></div><div class="a" style="left:282px;top:150px;width:2px;height:1px;background:#c4c4c4"></div><svg class="a" style="left:288px;top:145px" width="11" height="11" viewBox="0 0 11 11" fill="none" stroke-linecap="round" stroke-linejoin="round"><circle cx="5.5" cy="5.5" r="4.5" stroke="#999" stroke-width="1"/><path d="M3 5.5h5" stroke="#999" stroke-width="1"/></svg><div class="t" style="left:304px;top:143px;color:#8a8a8a">Акт переоценки</div><div class="a" style="left:393px;top:149px;width:1470px;height:1px;background:#d0d0d0"></div><div class="t" style="left:282px;top:118px;">Дата с</div><div class="a" style="left:320px;top:114px;width:52px;height:22px;background:#d5e3e8;border:1px solid #3a8ac4;border-radius:4px"></div><svg class="a" style="left:325px;top:120px" width="11" height="11" viewBox="0 0 11 11" fill="none" stroke-linecap="round" stroke-linejoin="round"><path d="M1 1l9 9 M10 1l-9 9" stroke="#222" stroke-width="1.3"/></svg><div class="a" style="left:339px;top:118px;width:1px;height:14px;background:#c9c9c9"></div><svg class="a" style="left:365px;top:129px" width="6" height="6" viewBox="0 0 6 6" fill="none" stroke-linecap="round" stroke-linejoin="round"><path d="M6 0V6H0z" fill="#3a8ac4"/></svg><div class="t" style="left:376px;top:118px;">Дата по</div><div class="a" style="left:423px;top:114px;width:52px;height:22px;background:#fff;border:1px solid #cdcdcd;border-radius:4px"></div><svg class="a" style="left:468px;top:129px" width="6" height="6" viewBox="0 0 6 6" fill="none" stroke-linecap="round" stroke-linejoin="round"><path d="M6 0V6H0z" fill="#3a8ac4"/></svg><div class="t" style="left:479px;top:118px;">Магазин</div><div class="a" style="left:530px;top:114px;width:105px;height:22px;background:#fff;border:1px solid #cdcdcd;border-radius:4px"></div><svg class="a" style="left:628px;top:129px" width="6" height="6" viewBox="0 0 6 6" fill="none" stroke-linecap="round" stroke-linejoin="round"><path d="M6 0V6H0z" fill="#3a8ac4"/></svg><div class="t" style="left:639px;top:118px;">Операция</div><div class="a" style="left:699px;top:114px;width:615px;height:22px;background:#fff;border:1px solid #cdcdcd;border-radius:4px"></div><div class="a" style="left:856px;top:115px;width:1px;height:20px;background:#cdcdcd"></div><div class="a" style="left:1104px;top:115px;width:1px;height:20px;background:#cdcdcd"></div><div class="t" style="left:577.0px;top:118px;width:400px;text-align:center;color:#7a7a7a">Переоценка за счет ТН</div><div class="t" style="left:780.0px;top:118px;width:400px;text-align:center;color:#7a7a7a">Дооценка до цены последнего прихода</div><div class="t" style="left:1008.0px;top:118px;width:400px;text-align:center;color:#7a7a7a">Переоценка товара на магазине</div><div class="a" style="left:282px;top:164px;width:1581px;height:403px;background:#fff;border:1px solid #8fc0dc;border-radius:4px"></div><div class="a" style="left:283px;top:165px;width:1579px;height:54px;background:#f2f2f2"></div><div class="a" style="left:283px;top:219px;width:1579px;height:1px;background:#e2e2e2"></div><div class="t" style="left:282px;top:177.0px;width:43px;text-align:center;overflow:hidden;color:#222">Закры</div><div class="t" style="left:282px;top:193.0px;width:43px;text-align:center;overflow:hidden;color:#222">т</div><svg class="a" style="left:319px;top:213px" width="6" height="6" viewBox="0 0 6 6" fill="none" stroke-linecap="round" stroke-linejoin="round"><path d="M6 0V6H0z" fill="#3a8ac4"/></svg><div class="t" style="left:325px;top:177.0px;width:43px;text-align:center;overflow:hidden;color:#222">Прове</div><div class="t" style="left:325px;top:193.0px;width:43px;text-align:center;overflow:hidden;color:#222">ден</div><svg class="a" style="left:362px;top:213px" width="6" height="6" viewBox="0 0 6 6" fill="none" stroke-linecap="round" stroke-linejoin="round"><path d="M6 0V6H0z" fill="#3a8ac4"/></svg><div class="t" style="left:368px;top:185.0px;width:59px;text-align:center;overflow:hidden;color:#222">Номер</div><svg class="a" style="left:421px;top:213px" width="6" height="6" viewBox="0 0 6 6" fill="none" stroke-linecap="round" stroke-linejoin="round"><path d="M6 0V6H0z" fill="#3a8ac4"/></svg><div class="t" style="left:427px;top:177.0px;width:26px;text-align:center;overflow:hidden;color:#222">Сер</div><div class="t" style="left:427px;top:193.0px;width:26px;text-align:center;overflow:hidden;color:#222">ия</div><svg class="a" style="left:447px;top:213px" width="6" height="6" viewBox="0 0 6 6" fill="none" stroke-linecap="round" stroke-linejoin="round"><path d="M6 0V6H0z" fill="#3a8ac4"/></svg><div class="t" style="left:453px;top:169.0px;width:51px;text-align:center;overflow:hidden;color:#222">Дата</div><div class="t" style="left:453px;top:185.0px;width:51px;text-align:center;overflow:hidden;color:#222">докуме</div><div class="t" style="left:453px;top:201.0px;width:51px;text-align:center;overflow:hidden;color:#222">нта</div><svg class="a" style="left:498px;top:213px" width="6" height="6" viewBox="0 0 6 6" fill="none" stroke-linecap="round" stroke-linejoin="round"><path d="M6 0V6H0z" fill="#3a8ac4"/></svg><div class="t" style="left:504px;top:166.0px;width:35px;text-align:center;overflow:hidden;color:#222">Врем</div><div class="t" style="left:504px;top:182.0px;width:35px;text-align:center;overflow:hidden;color:#222">я</div><div class="t" style="left:504px;top:198.0px;width:35px;text-align:center;overflow:hidden;color:#222">доку</div><svg class="a" style="left:533px;top:213px" width="6" height="6" viewBox="0 0 6 6" fill="none" stroke-linecap="round" stroke-linejoin="round"><path d="M6 0V6H0z" fill="#3a8ac4"/></svg><div class="t" style="left:539px;top:169.0px;width:51px;text-align:center;overflow:hidden;color:#222">Дата</div><div class="t" style="left:539px;top:185.0px;width:51px;text-align:center;overflow:hidden;color:#222">докуме</div><div class="t" style="left:539px;top:201.0px;width:51px;text-align:center;overflow:hidden;color:#222">нта (до)</div><svg class="a" style="left:584px;top:213px" width="6" height="6" viewBox="0 0 6 6" fill="none" stroke-linecap="round" stroke-linejoin="round"><path d="M6 0V6H0z" fill="#3a8ac4"/></svg><div class="t" style="left:590px;top:185.0px;width:136px;text-align:center;overflow:hidden;color:#222">Склад</div><svg class="a" style="left:720px;top:213px" width="6" height="6" viewBox="0 0 6 6" fill="none" stroke-linecap="round" stroke-linejoin="round"><path d="M6 0V6H0z" fill="#3a8ac4"/></svg><div class="t" style="left:726px;top:185.0px;width:201px;text-align:center;overflow:hidden;color:#222">Операция</div><svg class="a" style="left:921px;top:213px" width="6" height="6" viewBox="0 0 6 6" fill="none" stroke-linecap="round" stroke-linejoin="round"><path d="M6 0V6H0z" fill="#3a8ac4"/></svg><div class="t" style="left:927px;top:177.0px;width:59px;text-align:center;overflow:hidden;color:#222">Кол-во</div><div class="t" style="left:927px;top:193.0px;width:59px;text-align:center;overflow:hidden;color:#222">строк</div><div class="t" style="left:986px;top:169.0px;width:72px;text-align:center;overflow:hidden;color:#222">Сумма</div><div class="t" style="left:986px;top:185.0px;width:72px;text-align:center;overflow:hidden;color:#222">изменения</div><div class="t" style="left:986px;top:201.0px;width:72px;text-align:center;overflow:hidden;color:#222">поставщика</div><div class="t" style="left:1058px;top:169.0px;width:72px;text-align:center;overflow:hidden;color:#222">Сумма</div><div class="t" style="left:1058px;top:185.0px;width:72px;text-align:center;overflow:hidden;color:#222">изменения</div><div class="t" style="left:1058px;top:201.0px;width:72px;text-align:center;overflow:hidden;color:#222">надбавки</div><div class="t" style="left:1130px;top:169.0px;width:72px;text-align:center;overflow:hidden;color:#222">Сумма</div><div class="t" style="left:1130px;top:185.0px;width:72px;text-align:center;overflow:hidden;color:#222">изменения</div><div class="t" style="left:1130px;top:201.0px;width:72px;text-align:center;overflow:hidden;color:#222">НДС</div><div class="t" style="left:1202px;top:169.0px;width:72px;text-align:center;overflow:hidden;color:#222">Сумма</div><div class="t" style="left:1202px;top:185.0px;width:72px;text-align:center;overflow:hidden;color:#222">изменения</div><div class="t" style="left:1202px;top:201.0px;width:72px;text-align:center;overflow:hidden;color:#222">розничной</div><div class="t" style="left:1274px;top:177.0px;width:169px;text-align:center;overflow:hidden;color:#222">№ распоряжения на</div><div class="t" style="left:1274px;top:193.0px;width:169px;text-align:center;overflow:hidden;color:#222">переоценку</div><svg class="a" style="left:1437px;top:213px" width="6" height="6" viewBox="0 0 6 6" fill="none" stroke-linecap="round" stroke-linejoin="round"><path d="M6 0V6H0z" fill="#3a8ac4"/></svg><div class="t" style="left:1443px;top:166.0px;width:43px;text-align:center;overflow:hidden;color:#222">Не</div><div class="t" style="left:1443px;top:182.0px;width:43px;text-align:center;overflow:hidden;color:#222">измен</div><div class="t" style="left:1443px;top:198.0px;width:43px;text-align:center;overflow:hidden;color:#222">ять</div><svg class="a" style="left:1480px;top:213px" width="6" height="6" viewBox="0 0 6 6" fill="none" stroke-linecap="round" stroke-linejoin="round"><path d="M6 0V6H0z" fill="#3a8ac4"/></svg><div class="t" style="left:1486px;top:177.0px;width:104px;text-align:center;overflow:hidden;color:#222">Статус загрузки в</div><div class="t" style="left:1486px;top:193.0px;width:104px;text-align:center;overflow:hidden;color:#222">оборудование</div><div class="t" style="left:1590px;top:177.0px;width:104px;text-align:center;overflow:hidden;color:#222">Статус печати</div><div class="t" style="left:1590px;top:193.0px;width:104px;text-align:center;overflow:hidden;color:#222">ценника</div><div class="t" style="left:1694px;top:185.0px;width:202px;text-align:center;overflow:hidden;color:#222">Примечание</div><div class="a" style="left:283px;top:241px;width:1579px;height:1px;background:#e2e2e2"></div><div class="cb" style="left:298px;top:224px"></div><div class="cbc" style="left:341px;top:224px"><svg width="13" height="13" viewBox="0 0 13 13" style="position:absolute;left:0;top:0"><path d="M3 6.8l2.4 2.4L10 4.2" stroke="#fff" stroke-width="1.8" fill="none" stroke-linecap="round" stroke-linejoin="round"/></svg></div><div class="c" style="left:369px;top:220px;width:58px;height:21px;line-height:25px">п100041</div><div class="c" style="left:454px;top:220px;width:50px;height:21px;line-height:25px">13.03.24</div><div class="c" style="left:505px;top:220px;width:34px;height:21px;line-height:25px">12:37</div><div class="c" style="left:540px;top:220px;width:50px;height:21px;line-height:25px">13.03.24</div><div class="c" style="left:591px;top:220px;width:135px;height:21px;line-height:25px">Магазин 13</div><div class="c" style="left:727px;top:220px;width:200px;height:21px;line-height:25px">Переоценка за счет ТН</div><div class="c r" style="left:928px;top:220px;width:58px;height:21px;line-height:25px">1</div><div class="c r" style="left:1059px;top:220px;width:71px;height:21px;line-height:25px">34,85</div><div class="c r" style="left:1131px;top:220px;width:71px;height:21px;line-height:25px">6,97</div><div class="c r" style="left:1203px;top:220px;width:71px;height:21px;line-height:25px">41,82</div><div class="cb" style="left:1459px;top:224px"></div><div class="c" style="left:1487px;top:220px;width:103px;height:21px;line-height:25px">Успешно загружен</div><div class="c" style="left:1591px;top:220px;width:103px;height:21px;line-height:25px">Распечатан</div><div class="a" style="left:1487px;top:242px;width:103px;height:21px;background:#fdfb8a"></div><div class="a" style="left:283px;top:263px;width:1579px;height:1px;background:#e2e2e2"></div><div class="cb" style="left:298px;top:246px"></div><div class="cbc" style="left:341px;top:246px"><svg width="13" height="13" viewBox="0 0 13 13" style="position:absolute;left:0;top:0"><path d="M3 6.8l2.4 2.4L10 4.2" stroke="#fff" stroke-width="1.8" fill="none" stroke-linecap="round" stroke-linejoin="round"/></svg></div><div class="c" style="left:369px;top:242px;width:58px;height:21px;line-height:25px">п100049</div><div class="c" style="left:454px;top:242px;width:50px;height:21px;line-height:25px">13.03.24</div><div class="c" style="left:505px;top:242px;width:34px;height:21px;line-height:25px">16:27</div><div class="c" style="left:540px;top:242px;width:50px;height:21px;line-height:25px">13.03.24</div><div class="c" style="left:591px;top:242px;width:135px;height:21px;line-height:25px">Магазин 3</div><div class="c" style="left:727px;top:242px;width:200px;height:21px;line-height:25px">Переоценка за счет ТН</div><div class="c r" style="left:928px;top:242px;width:58px;height:21px;line-height:25px">1</div><div class="c r" style="left:987px;top:242px;width:71px;height:21px;line-height:25px">-1,61</div><div class="c r" style="left:1059px;top:242px;width:71px;height:21px;line-height:25px">-0,71</div><div class="c r" style="left:1131px;top:242px;width:71px;height:21px;line-height:25px">-0,46</div><div class="c r" style="left:1203px;top:242px;width:71px;height:21px;line-height:25px">-2,78</div><div class="cb" style="left:1459px;top:246px"></div><div class="c" style="left:1487px;top:242px;width:103px;height:21px;line-height:25px">Принят к загрузке</div><div class="c" style="left:1591px;top:242px;width:103px;height:21px;line-height:25px">Распечатан</div><div class="a" style="left:1487px;top:264px;width:103px;height:21px;background:#fdfb8a"></div><div class="a" style="left:283px;top:285px;width:1579px;height:1px;background:#e2e2e2"></div><div class="cb" style="left:298px;top:268px"></div><div class="cbc" style="left:341px;top:268px"><svg width="13" height="13" viewBox="0 0 13 13" style="position:absolute;left:0;top:0"><path d="M3 6.8l2.4 2.4L10 4.2" stroke="#fff" stroke-width="1.8" fill="none" stroke-linecap="round" stroke-linejoin="round"/></svg></div><div class="c" style="left:369px;top:264px;width:58px;height:21px;line-height:25px">00419</div><div class="c" style="left:428px;top:264px;width:25px;height:21px;line-height:25px">ПО</div><div class="c" style="left:454px;top:264px;width:50px;height:21px;line-height:25px">13.03.24</div><div class="c" style="left:505px;top:264px;width:34px;height:21px;line-height:25px">00:00</div><div class="c" style="left:540px;top:264px;width:50px;height:21px;line-height:25px">12.03.24</div><div class="c" style="left:591px;top:264px;width:135px;height:21px;line-height:25px">ЛюксСофтТрейд2</div><div class="c" style="left:727px;top:264px;width:200px;height:21px;line-height:25px">Переоценка за счет ТН</div><div class="c r" style="left:928px;top:264px;width:58px;height:21px;line-height:25px">2</div><div class="c r" style="left:1059px;top:264px;width:71px;height:21px;line-height:25px">-70,59</div><div class="c r" style="left:1131px;top:264px;width:71px;height:21px;line-height:25px">-14,11</div><div class="c r" style="left:1203px;top:264px;width:71px;height:21px;line-height:25px">-84,7</div><div class="cb" style="left:1459px;top:268px"></div><div class="c" style="left:1487px;top:264px;width:103px;height:21px;line-height:25px">Принят к загрузке</div><div class="c" style="left:1591px;top:264px;width:103px;height:21px;line-height:25px">Распечатан</div><div class="a" style="left:1487px;top:286px;width:103px;height:21px;background:#d8fcd4"></div><div class="a" style="left:1591px;top:286px;width:103px;height:21px;background:#d8fcd4"></div><div class="a" style="left:283px;top:307px;width:1579px;height:1px;background:#e2e2e2"></div><div class="cb" style="left:298px;top:290px"></div><div class="cbc" style="left:341px;top:290px"><svg width="13" height="13" viewBox="0 0 13 13" style="position:absolute;left:0;top:0"><path d="M3 6.8l2.4 2.4L10 4.2" stroke="#fff" stroke-width="1.8" fill="none" stroke-linecap="round" stroke-linejoin="round"/></svg></div><div class="c" style="left:369px;top:286px;width:58px;height:21px;line-height:25px">00427</div><div class="c" style="left:428px;top:286px;width:25px;height:21px;line-height:25px">ПО</div><div class="c" style="left:454px;top:286px;width:50px;height:21px;line-height:25px">16.03.24</div><div class="c" style="left:505px;top:286px;width:34px;height:21px;line-height:25px">16:52</div><div class="c" style="left:540px;top:286px;width:50px;height:21px;line-height:25px">16.03.24</div><div class="c" style="left:591px;top:286px;width:135px;height:21px;line-height:25px">ЛюксСофтТрейд2</div><div class="c" style="left:727px;top:286px;width:200px;height:21px;line-height:25px">Переоценка товара на магазине</div><div class="c r" style="left:928px;top:286px;width:58px;height:21px;line-height:25px">7</div><div class="c r" style="left:1059px;top:286px;width:71px;height:21px;line-height:25px">-19,95</div><div class="c r" style="left:1131px;top:286px;width:71px;height:21px;line-height:25px">-2</div><div class="c r" style="left:1203px;top:286px;width:71px;height:21px;line-height:25px">-21,95</div><div class="cb" style="left:1459px;top:290px"></div><div class="c" style="left:1487px;top:286px;width:103px;height:21px;line-height:25px">Не загружен</div><div class="c" style="left:1591px;top:286px;width:103px;height:21px;line-height:25px">Не распечатан</div><div class="a" style="left:1487px;top:308px;width:103px;height:21px;background:#d8fcd4"></div><div class="a" style="left:1591px;top:308px;width:103px;height:21px;background:#d8fcd4"></div><div class="a" style="left:283px;top:329px;width:1579px;height:1px;background:#e2e2e2"></div><div class="cb" style="left:298px;top:312px"></div><div class="cbc" style="left:341px;top:312px"><svg width="13" height="13" viewBox="0 0 13 13" style="position:absolute;left:0;top:0"><path d="M3 6.8l2.4 2.4L10 4.2" stroke="#fff" stroke-width="1.8" fill="none" stroke-linecap="round" stroke-linejoin="round"/></svg></div><div class="c" style="left:369px;top:308px;width:58px;height:21px;line-height:25px">00032</div><div class="c" style="left:428px;top:308px;width:25px;height:21px;line-height:25px">УУ</div><div class="c" style="left:454px;top:308px;width:50px;height:21px;line-height:25px">13.03.24</div><div class="c" style="left:505px;top:308px;width:34px;height:21px;line-height:25px">11:03</div><div class="c" style="left:540px;top:308px;width:50px;height:21px;line-height:25px">13.03.24</div><div class="c" style="left:591px;top:308px;width:135px;height:21px;line-height:25px">ЛюксСофтТрейд2</div><div class="c" style="left:727px;top:308px;width:200px;height:21px;line-height:25px">Переоценка за счет ТН</div><div class="c r" style="left:928px;top:308px;width:58px;height:21px;line-height:25px">1</div><div class="c r" style="left:1059px;top:308px;width:71px;height:21px;line-height:25px">-10,25</div><div class="c r" style="left:1131px;top:308px;width:71px;height:21px;line-height:25px">-2,05</div><div class="c r" style="left:1203px;top:308px;width:71px;height:21px;line-height:25px">-12,3</div><div class="cb" style="left:1459px;top:312px"></div><div class="c" style="left:1487px;top:308px;width:103px;height:21px;line-height:25px">Не загружен</div><div class="c" style="left:1591px;top:308px;width:103px;height:21px;line-height:25px">Не распечатан</div><div class="a" style="left:283px;top:351px;width:1579px;height:1px;background:#e2e2e2"></div><div class="cb" style="left:298px;top:334px"></div><div class="cbc" style="left:341px;top:334px"><svg width="13" height="13" viewBox="0 0 13 13" style="position:absolute;left:0;top:0"><path d="M3 6.8l2.4 2.4L10 4.2" stroke="#fff" stroke-width="1.8" fill="none" stroke-linecap="round" stroke-linejoin="round"/></svg></div><div class="c" style="left:369px;top:330px;width:58px;height:21px;line-height:25px">00434</div><div class="c" style="left:428px;top:330px;width:25px;height:21px;line-height:25px">ПО</div><div class="c" style="left:454px;top:330px;width:50px;height:21px;line-height:25px">17.03.24</div><div class="c" style="left:505px;top:330px;width:34px;height:21px;line-height:25px">11:26</div><div class="c" style="left:540px;top:330px;width:50px;height:21px;line-height:25px">17.03.24</div><div class="c" style="left:591px;top:330px;width:135px;height:21px;line-height:25px">ЛюксСофтТрейд2</div><div class="c" style="left:727px;top:330px;width:200px;height:21px;line-height:25px">Переоценка товара на магазине</div><div class="c r" style="left:928px;top:330px;width:58px;height:21px;line-height:25px">1</div><div class="cbc" style="left:1459px;top:334px"><svg width="13" height="13" viewBox="0 0 13 13" style="position:absolute;left:0;top:0"><path d="M3 6.8l2.4 2.4L10 4.2" stroke="#fff" stroke-width="1.8" fill="none" stroke-linecap="round" stroke-linejoin="round"/></svg></div><div class="c" style="left:1487px;top:330px;width:103px;height:21px;line-height:25px">Загрузка не требуется</div><div class="c" style="left:1591px;top:330px;width:103px;height:21px;line-height:25px">Загрузка не требуется</div><div class="a" style="left:1487px;top:352px;width:103px;height:21px;background:#d8fcd4"></div><div class="a" style="left:1591px;top:352px;width:103px;height:21px;background:#d8fcd4"></div><div class="a" style="left:283px;top:373px;width:1579px;height:1px;background:#e2e2e2"></div><div class="cb" style="left:298px;top:356px"></div><div class="cbc" style="left:341px;top:356px"><svg width="13" height="13" viewBox="0 0 13 13" style="position:absolute;left:0;top:0"><path d="M3 6.8l2.4 2.4L10 4.2" stroke="#fff" stroke-width="1.8" fill="none" stroke-linecap="round" stroke-linejoin="round"/></svg></div><div class="c" style="left:369px;top:352px;width:58px;height:21px;line-height:25px">1</div><div class="c" style="left:454px;top:352px;width:50px;height:21px;line-height:25px">17.03.24</div><div class="c" style="left:505px;top:352px;width:34px;height:21px;line-height:25px">13:12</div><div class="c" style="left:540px;top:352px;width:50px;height:21px;line-height:25px">17.03.24</div><div class="c" style="left:591px;top:352px;width:135px;height:21px;line-height:25px">ЛюксСофтТрейд2</div><div class="c" style="left:727px;top:352px;width:200px;height:21px;line-height:25px">Переоценка товара на магазине</div><div class="c r" style="left:928px;top:352px;width:58px;height:21px;line-height:25px">1</div><div class="c r" style="left:1059px;top:352px;width:71px;height:21px;line-height:25px">0,18</div><div class="c r" style="left:1131px;top:352px;width:71px;height:21px;line-height:25px">0,02</div><div class="c r" style="left:1203px;top:352px;width:71px;height:21px;line-height:25px">0,2</div><div class="cb" style="left:1459px;top:356px"></div><div class="c" style="left:1487px;top:352px;width:103px;height:21px;line-height:25px">Не загружен</div><div class="c" style="left:1591px;top:352px;width:103px;height:21px;line-height:25px">Не распечатан</div><div class="a" style="left:1487px;top:374px;width:103px;height:21px;background:#fdfb8a"></div><div class="a" style="left:283px;top:395px;width:1579px;height:1px;background:#e2e2e2"></div><div class="cb" style="left:298px;top:378px"></div><div class="cbc" style="left:341px;top:378px"><svg width="13" height="13" viewBox="0 0 13 13" style="position:absolute;left:0;top:0"><path d="M3 6.8l2.4 2.4L10 4.2" stroke="#fff" stroke-width="1.8" fill="none" stroke-linecap="round" stroke-linejoin="round"/></svg></div><div class="c" style="left:369px;top:374px;width:58px;height:21px;line-height:25px">00436</div><div class="c" style="left:428px;top:374px;width:25px;height:21px;line-height:25px">ПО</div><div class="c" style="left:454px;top:374px;width:50px;height:21px;line-height:25px">13.03.24</div><div class="c" style="left:505px;top:374px;width:34px;height:21px;line-height:25px">17:11</div><div class="c" style="left:540px;top:374px;width:50px;height:21px;line-height:25px">13.03.24</div><div class="c" style="left:591px;top:374px;width:135px;height:21px;line-height:25px">ЛюксСофтТрейд2</div><div class="c" style="left:727px;top:374px;width:200px;height:21px;line-height:25px">Переоценка товара на магазине</div><div class="c r" style="left:928px;top:374px;width:58px;height:21px;line-height:25px">1</div><div class="c r" style="left:1059px;top:374px;width:71px;height:21px;line-height:25px">574,18</div><div class="c r" style="left:1131px;top:374px;width:71px;height:21px;line-height:25px">114,83</div><div class="c r" style="left:1203px;top:374px;width:71px;height:21px;line-height:25px">689,01</div><div class="cb" style="left:1459px;top:378px"></div><div class="c" style="left:1487px;top:374px;width:103px;height:21px;line-height:25px">Не загружен</div><div class="c" style="left:1591px;top:374px;width:103px;height:21px;line-height:25px">Распечатан</div><div class="c" style="left:1695px;top:374px;width:167px;height:21px;line-height:25px">ТО2302171</div><div class="a" style="left:1487px;top:396px;width:103px;height:21px;background:#d8fcd4"></div><div class="a" style="left:1591px;top:396px;width:103px;height:21px;background:#d8fcd4"></div><div class="a" style="left:283px;top:417px;width:1579px;height:1px;background:#e2e2e2"></div><div class="cb" style="left:298px;top:400px"></div><div class="cbc" style="left:341px;top:400px"><svg width="13" height="13" viewBox="0 0 13 13" style="position:absolute;left:0;top:0"><path d="M3 6.8l2.4 2.4L10 4.2" stroke="#fff" stroke-width="1.8" fill="none" stroke-linecap="round" stroke-linejoin="round"/></svg></div><div class="c" style="left:369px;top:396px;width:58px;height:21px;line-height:25px">00034</div><div class="c" style="left:428px;top:396px;width:25px;height:21px;line-height:25px">УУ</div><div class="c" style="left:454px;top:396px;width:50px;height:21px;line-height:25px">13.03.24</div><div class="c" style="left:505px;top:396px;width:34px;height:21px;line-height:25px">11:15</div><div class="c" style="left:540px;top:396px;width:50px;height:21px;line-height:25px">13.03.24</div><div class="c" style="left:591px;top:396px;width:135px;height:21px;line-height:25px">ЛюксСофтТрейд2</div><div class="c" style="left:727px;top:396px;width:200px;height:21px;line-height:25px">Переоценка за счет ТН</div><div class="c r" style="left:928px;top:396px;width:58px;height:21px;line-height:25px">1</div><div class="c r" style="left:987px;top:396px;width:71px;height:21px;line-height:25px">-0,14</div><div class="c r" style="left:1059px;top:396px;width:71px;height:21px;line-height:25px">-1,66</div><div class="c r" style="left:1131px;top:396px;width:71px;height:21px;line-height:25px">-0,18</div><div class="c r" style="left:1203px;top:396px;width:71px;height:21px;line-height:25px">-1,98</div><div class="cb" style="left:1459px;top:400px"></div><div class="c" style="left:1487px;top:396px;width:103px;height:21px;line-height:25px">Не загружен</div><div class="c" style="left:1591px;top:396px;width:103px;height:21px;line-height:25px">Не распечатан</div><div class="a" style="left:1487px;top:418px;width:103px;height:21px;background:#d8fcd4"></div><div class="a" style="left:1591px;top:418px;width:103px;height:21px;background:#d8fcd4"></div><div class="a" style="left:283px;top:439px;width:1579px;height:1px;background:#e2e2e2"></div><div class="cb" style="left:298px;top:422px"></div><div class="cbc" style="left:341px;top:422px"><svg width="13" height="13" viewBox="0 0 13 13" style="position:absolute;left:0;top:0"><path d="M3 6.8l2.4 2.4L10 4.2" stroke="#fff" stroke-width="1.8" fill="none" stroke-linecap="round" stroke-linejoin="round"/></svg></div><div class="c" style="left:369px;top:418px;width:58px;height:21px;line-height:25px">00035</div><div class="c" style="left:428px;top:418px;width:25px;height:21px;line-height:25px">УУ</div><div class="c" style="left:454px;top:418px;width:50px;height:21px;line-height:25px">13.03.24</div><div class="c" style="left:505px;top:418px;width:34px;height:21px;line-height:25px">17:18</div><div class="c" style="left:540px;top:418px;width:50px;height:21px;line-height:25px">13.03.24</div><div class="c" style="left:591px;top:418px;width:135px;height:21px;line-height:25px">ЛюксСофтТрейд2</div><div class="c" style="left:727px;top:418px;width:200px;height:21px;line-height:25px">Переоценка за счет ТН</div><div class="c r" style="left:928px;top:418px;width:58px;height:21px;line-height:25px">1</div><div class="c r" style="left:987px;top:418px;width:71px;height:21px;line-height:25px">-2,73</div><div class="c r" style="left:1059px;top:418px;width:71px;height:21px;line-height:25px">-0,52</div><div class="c r" style="left:1131px;top:418px;width:71px;height:21px;line-height:25px">-0,65</div><div class="c r" style="left:1203px;top:418px;width:71px;height:21px;line-height:25px">-3,9</div><div class="cb" style="left:1459px;top:422px"></div><div class="c" style="left:1487px;top:418px;width:103px;height:21px;line-height:25px">Не загружен</div><div class="c" style="left:1591px;top:418px;width:103px;height:21px;line-height:25px">Не распечатан</div><div class="a" style="left:1487px;top:440px;width:103px;height:21px;background:#d8fcd4"></div><div class="a" style="left:283px;top:461px;width:1579px;height:1px;background:#e2e2e2"></div><div class="cb" style="left:298px;top:444px"></div><div class="cbc" style="left:341px;top:444px"><svg width="13" height="13" viewBox="0 0 13 13" style="position:absolute;left:0;top:0"><path d="M3 6.8l2.4 2.4L10 4.2" stroke="#fff" stroke-width="1.8" fill="none" stroke-linecap="round" stroke-linejoin="round"/></svg></div><div class="c" style="left:369px;top:440px;width:58px;height:21px;line-height:25px">00038</div><div class="c" style="left:428px;top:440px;width:25px;height:21px;line-height:25px">УУ</div><div class="c" style="left:454px;top:440px;width:50px;height:21px;line-height:25px">13.03.24</div><div class="c" style="left:505px;top:440px;width:34px;height:21px;line-height:25px">20:18</div><div class="c" style="left:540px;top:440px;width:50px;height:21px;line-height:25px">13.03.24</div><div class="c" style="left:591px;top:440px;width:135px;height:21px;line-height:25px">ЛюксСофтТрейд2</div><div class="c" style="left:727px;top:440px;width:200px;height:21px;line-height:25px">Переоценка за счет ТН</div><div class="c r" style="left:928px;top:440px;width:58px;height:21px;line-height:25px">1</div><div class="c r" style="left:1059px;top:440px;width:71px;height:21px;line-height:25px">-0,41</div><div class="c r" style="left:1131px;top:440px;width:71px;height:21px;line-height:25px">-0,09</div><div class="c r" style="left:1203px;top:440px;width:71px;height:21px;line-height:25px">-0,5</div><div class="cb" style="left:1459px;top:444px"></div><div class="c" style="left:1487px;top:440px;width:103px;height:21px;line-height:25px">Не загружен</div><div class="c" style="left:1591px;top:440px;width:103px;height:21px;line-height:25px">Распечатан</div><div class="a" style="left:1487px;top:462px;width:103px;height:21px;background:#d8fcd4"></div><div class="a" style="left:1591px;top:462px;width:103px;height:21px;background:#d8fcd4"></div><div class="a" style="left:283px;top:483px;width:1579px;height:1px;background:#e2e2e2"></div><div class="cb" style="left:298px;top:466px"></div><div class="cbc" style="left:341px;top:466px"><svg width="13" height="13" viewBox="0 0 13 13" style="position:absolute;left:0;top:0"><path d="M3 6.8l2.4 2.4L10 4.2" stroke="#fff" stroke-width="1.8" fill="none" stroke-linecap="round" stroke-linejoin="round"/></svg></div><div class="c" style="left:369px;top:462px;width:58px;height:21px;line-height:25px">00041</div><div class="c" style="left:428px;top:462px;width:25px;height:21px;line-height:25px">УУ</div><div class="c" style="left:454px;top:462px;width:50px;height:21px;line-height:25px">13.03.24</div><div class="c" style="left:505px;top:462px;width:34px;height:21px;line-height:25px">17:02</div><div class="c" style="left:540px;top:462px;width:50px;height:21px;line-height:25px">13.03.24</div><div class="c" style="left:591px;top:462px;width:135px;height:21px;line-height:25px">Магазин 12</div><div class="c" style="left:727px;top:462px;width:200px;height:21px;line-height:25px">Переоценка за счет ТН</div><div class="c r" style="left:928px;top:462px;width:58px;height:21px;line-height:25px">1</div><div class="c r" style="left:987px;top:462px;width:71px;height:21px;line-height:25px">77,09</div><div class="c r" style="left:1131px;top:462px;width:71px;height:21px;line-height:25px">15,42</div><div class="c r" style="left:1203px;top:462px;width:71px;height:21px;line-height:25px">92,51</div><div class="cb" style="left:1459px;top:466px"></div><div class="c" style="left:1487px;top:462px;width:103px;height:21px;line-height:25px">Не загружен</div><div class="c" style="left:1591px;top:462px;width:103px;height:21px;line-height:25px">Не распечатан</div><div class="a" style="left:1487px;top:484px;width:103px;height:21px;background:#d8fcd4"></div><div class="a" style="left:1591px;top:484px;width:103px;height:21px;background:#d8fcd4"></div><div class="a" style="left:283px;top:505px;width:1579px;height:1px;background:#e2e2e2"></div><div class="cb" style="left:298px;top:488px"></div><div class="cbc" style="left:341px;top:488px"><svg width="13" height="13" viewBox="0 0 13 13" style="position:absolute;left:0;top:0"><path d="M3 6.8l2.4 2.4L10 4.2" stroke="#fff" stroke-width="1.8" fill="none" stroke-linecap="round" stroke-linejoin="round"/></svg></div><div class="c" style="left:369px;top:484px;width:58px;height:21px;line-height:25px">00042</div><div class="c" style="left:428px;top:484px;width:25px;height:21px;line-height:25px">УУ</div><div class="c" style="left:454px;top:484px;width:50px;height:21px;line-height:25px">13.03.24</div><div class="c" style="left:505px;top:484px;width:34px;height:21px;line-height:25px">17:06</div><div class="c" style="left:540px;top:484px;width:50px;height:21px;line-height:25px">13.03.24</div><div class="c" style="left:591px;top:484px;width:135px;height:21px;line-height:25px">Магазин 12</div><div class="c" style="left:727px;top:484px;width:200px;height:21px;line-height:25px">Переоценка за счет ТН</div><div class="c r" style="left:928px;top:484px;width:58px;height:21px;line-height:25px">1</div><div class="c r" style="left:1059px;top:484px;width:71px;height:21px;line-height:25px">6,67</div><div class="c r" style="left:1131px;top:484px;width:71px;height:21px;line-height:25px">-16,67</div><div class="c r" style="left:1203px;top:484px;width:71px;height:21px;line-height:25px">-10</div><div class="cb" style="left:1459px;top:488px"></div><div class="c" style="left:1487px;top:484px;width:103px;height:21px;line-height:25px">Не загружен</div><div class="c" style="left:1591px;top:484px;width:103px;height:21px;line-height:25px">Не распечатан</div><div class="a" style="left:1487px;top:506px;width:103px;height:21px;background:#d8fcd4"></div><div class="a" style="left:1591px;top:506px;width:103px;height:21px;background:#d8fcd4"></div><div class="a" style="left:283px;top:527px;width:1579px;height:1px;background:#e2e2e2"></div><div class="cb" style="left:298px;top:510px"></div><div class="cbc" style="left:341px;top:510px"><svg width="13" height="13" viewBox="0 0 13 13" style="position:absolute;left:0;top:0"><path d="M3 6.8l2.4 2.4L10 4.2" stroke="#fff" stroke-width="1.8" fill="none" stroke-linecap="round" stroke-linejoin="round"/></svg></div><div class="c" style="left:369px;top:506px;width:58px;height:21px;line-height:25px">00044</div><div class="c" style="left:428px;top:506px;width:25px;height:21px;line-height:25px">УУ</div><div class="c" style="left:454px;top:506px;width:50px;height:21px;line-height:25px">13.03.24</div><div class="c" style="left:505px;top:506px;width:34px;height:21px;line-height:25px">16:46</div><div class="c" style="left:540px;top:506px;width:50px;height:21px;line-height:25px">13.03.24</div><div class="c" style="left:591px;top:506px;width:135px;height:21px;line-height:25px">Магазин 12</div><div class="c" style="left:727px;top:506px;width:200px;height:21px;line-height:25px">Переоценка за счет ТН</div><div class="c r" style="left:928px;top:506px;width:58px;height:21px;line-height:25px">1</div><div class="c r" style="left:987px;top:506px;width:71px;height:21px;line-height:25px">35,43</div><div class="c r" style="left:1131px;top:506px;width:71px;height:21px;line-height:25px">7,08</div><div class="c r" style="left:1203px;top:506px;width:71px;height:21px;line-height:25px">42,51</div><div class="cb" style="left:1459px;top:510px"></div><div class="c" style="left:1487px;top:506px;width:103px;height:21px;line-height:25px">Не загружен</div><div class="c" style="left:1591px;top:506px;width:103px;height:21px;line-height:25px">Не распечатан</div><div class="a" style="left:283px;top:528px;width:1579px;height:21px;background:#d5e3e8"></div><div class="a" style="left:283px;top:549px;width:1579px;height:1px;background:#e2e2e2"></div><div class="cb" style="left:298px;top:532px"></div><div class="cbc" style="left:341px;top:532px"><svg width="13" height="13" viewBox="0 0 13 13" style="position:absolute;left:0;top:0"><path d="M3 6.8l2.4 2.4L10 4.2" stroke="#fff" stroke-width="1.8" fill="none" stroke-linecap="round" stroke-linejoin="round"/></svg></div><div class="c" style="left:369px;top:528px;width:58px;height:21px;line-height:25px">00439</div><div class="c" style="left:428px;top:528px;width:25px;height:21px;line-height:25px">ПО</div><div class="c" style="left:454px;top:528px;width:50px;height:21px;line-height:25px">13.03.24</div><div class="c" style="left:505px;top:528px;width:34px;height:21px;line-height:25px">17:56</div><div class="c" style="left:540px;top:528px;width:50px;height:21px;line-height:25px">13.03.24</div><div class="c" style="left:591px;top:528px;width:135px;height:21px;line-height:25px">Магазин 3</div><div class="c" style="left:727px;top:528px;width:200px;height:21px;line-height:25px">Переоценка за счет ТН</div><div class="c r" style="left:928px;top:528px;width:58px;height:21px;line-height:25px">7</div><div class="c r" style="left:987px;top:528px;width:71px;height:21px;line-height:25px">-55,75</div><div class="c r" style="left:1059px;top:528px;width:71px;height:21px;line-height:25px">-99,17</div><div class="c r" style="left:1131px;top:528px;width:71px;height:21px;line-height:25px">-30,98</div><div class="c r" style="left:1203px;top:528px;width:71px;height:21px;line-height:25px">-185,9</div><div class="cbc" style="left:1459px;top:532px"><svg width="13" height="13" viewBox="0 0 13 13" style="position:absolute;left:0;top:0"><path d="M3 6.8l2.4 2.4L10 4.2" stroke="#fff" stroke-width="1.8" fill="none" stroke-linecap="round" stroke-linejoin="round"/></svg></div><div class="c" style="left:1487px;top:528px;width:103px;height:21px;line-height:25px">Загрузка не требуется</div><div class="c" style="left:1591px;top:528px;width:103px;height:21px;line-height:25px">Загрузка не требуется</div><div class="a" style="left:325px;top:165px;width:1px;height:54px;background:#e2e2e2"></div><div class="a" style="left:325px;top:219px;width:1px;height:331px;background:#e2e2e2"></div><div class="a" style="left:368px;top:165px;width:1px;height:54px;background:#e2e2e2"></div><div class="a" style="left:368px;top:219px;width:1px;height:331px;background:#e2e2e2"></div><div class="a" style="left:427px;top:165px;width:1px;height:54px;background:#e2e2e2"></div><div class="a" style="left:427px;top:219px;width:1px;height:331px;background:#e2e2e2"></div><div class="a" style="left:453px;top:165px;width:1px;height:54px;background:#e2e2e2"></div><div class="a" style="left:453px;top:219px;width:1px;height:331px;background:#e2e2e2"></div><div class="a" style="left:504px;top:165px;width:1px;height:54px;background:#e2e2e2"></div><div class="a" style="left:504px;top:219px;width:1px;height:331px;background:#e2e2e2"></div><div class="a" style="left:539px;top:165px;width:1px;height:54px;background:#e2e2e2"></div><div class="a" style="left:539px;top:219px;width:1px;height:331px;background:#e2e2e2"></div><div class="a" style="left:590px;top:165px;width:1px;height:54px;background:#e2e2e2"></div><div class="a" style="left:590px;top:219px;width:1px;height:331px;background:#e2e2e2"></div><div class="a" style="left:726px;top:165px;width:1px;height:54px;background:#e2e2e2"></div><div class="a" style="left:726px;top:219px;width:1px;height:331px;background:#e2e2e2"></div><div class="a" style="left:927px;top:165px;width:1px;height:54px;background:#e2e2e2"></div><div class="a" style="left:927px;top:219px;width:1px;height:331px;background:#e2e2e2"></div><div class="a" style="left:986px;top:165px;width:1px;height:54px;background:#e2e2e2"></div><div class="a" style="left:986px;top:219px;width:1px;height:331px;background:#e2e2e2"></div><div class="a" style="left:1058px;top:165px;width:1px;height:54px;background:#e2e2e2"></div><div class="a" style="left:1058px;top:219px;width:1px;height:331px;background:#e2e2e2"></div><div class="a" style="left:1130px;top:165px;width:1px;height:54px;background:#e2e2e2"></div><div class="a" style="left:1130px;top:219px;width:1px;height:331px;background:#e2e2e2"></div><div class="a" style="left:1202px;top:165px;width:1px;height:54px;background:#e2e2e2"></div><div class="a" style="left:1202px;top:219px;width:1px;height:331px;background:#e2e2e2"></div><div class="a" style="left:1274px;top:165px;width:1px;height:54px;background:#e2e2e2"></div><div class="a" style="left:1274px;top:219px;width:1px;height:331px;background:#e2e2e2"></div><div class="a" style="left:1443px;top:165px;width:1px;height:54px;background:#e2e2e2"></div><div class="a" style="left:1443px;top:219px;width:1px;height:331px;background:#e2e2e2"></div><div class="a" style="left:1486px;top:165px;width:1px;height:54px;background:#e2e2e2"></div><div class="a" style="left:1486px;top:219px;width:1px;height:331px;background:#e2e2e2"></div><div class="a" style="left:1590px;top:165px;width:1px;height:54px;background:#e2e2e2"></div><div class="a" style="left:1590px;top:219px;width:1px;height:331px;background:#e2e2e2"></div><div class="a" style="left:1694px;top:165px;width:1px;height:54px;background:#e2e2e2"></div><div class="a" style="left:1694px;top:219px;width:1px;height:331px;background:#e2e2e2"></div><div class="a" style="left:283px;top:558px;width:1547px;height:8px;background:#dadada"></div><div class="a" style="left:282px;top:571px;width:28px;height:22px;background:#d5e3e8;border-radius:5px"></div><svg class="a" style="left:286px;top:572px" width="20" height="20" viewBox="286 572 20 20" fill="none" stroke-linecap="round" stroke-linejoin="round"><g transform="translate(296 582)"><circle cx="-6" cy="-4.5" r="1.5" stroke="#5ab4e8" stroke-width="1"/><circle cx="-6" cy="0.5" r="1.5" stroke="#5ab4e8" stroke-width="1"/><circle cx="-6" cy="5.5" r="1.5" stroke="#5ab4e8" stroke-width="1"/><path d="M-1.4 -4.5H7.4M-1.4 0.5H7.4M-1.4 5.5H7.4" stroke="#222" stroke-width="1.2" /></g></svg><svg class="a" style="left:314px;top:572px" width="20" height="20" viewBox="314 572 20 20" fill="none" stroke-linecap="round" stroke-linejoin="round"><g transform="translate(324 582)"><path d="M-2.4 -7.5V7.3M2.5 -7.5V7.3M-7.4 -2.5H7.4M-7.4 2.5H7.4" stroke="#5ab4e8" stroke-width="1.1" /><rect x="-7.8" y="-7.9" width="15.6" height="15.4" rx="1.3" stroke="#222" stroke-width="1.3"/></g></svg><svg class="a" style="left:342px;top:572px" width="20" height="20" viewBox="342 572 20 20" fill="none" stroke-linecap="round" stroke-linejoin="round"><g transform="translate(352 582)"><rect x="-7.7" y="-6" width="15.4" height="13.5" rx="1.8" stroke="#222" stroke-width="1.3"/><path d="M-7.5 -2.6H7.5M-3.5 -8V-6M3.6 -8V-6" stroke="#222" stroke-width="1.3" /><path d="M-5.2 2.5H5.5M-2.7 -0.4V5M2.4 -0.4V5" stroke="#5ab4e8" stroke-width="1.1" /></g></svg><svg class="a" style="left:374px;top:572px" width="20" height="20" viewBox="374 572 20 20" fill="none" stroke-linecap="round" stroke-linejoin="round"><g transform="translate(384 582)"><path d="M-7.5 -5.5H7.6M-3.2 2.5H3.3" stroke="#222" stroke-width="1.2" /><path d="M-5.6 -1.5H5.6M-1.2 6.5H1.5" stroke="#5ab4e8" stroke-width="1.1" /></g></svg><svg class="a" style="left:406px;top:572px" width="20" height="20" viewBox="406 572 20 20" fill="none" stroke-linecap="round" stroke-linejoin="round"><g transform="translate(416 582)"><path d="M5.47 -1.22L7.54 -0.99L7.54 0.99L5.47 1.22L4.73 3.00L6.03 4.63L4.63 6.03L3.00 4.73L1.22 5.47L0.99 7.54L-0.99 7.54L-1.22 5.47L-3.00 4.73L-4.63 6.03L-6.03 4.63L-4.73 3.00L-5.47 1.22L-7.54 0.99L-7.54 -0.99L-5.47 -1.22L-4.73 -3.00L-6.03 -4.63L-4.63 -6.03L-3.00 -4.73L-1.22 -5.47L-0.99 -7.54L0.99 -7.54L1.22 -5.47L3.00 -4.73L4.63 -6.03L6.03 -4.63L4.73 -3.00z" stroke="#222" stroke-width="1.2" /><circle cx="0" cy="0" r="2.5" stroke="#5ab4e8" stroke-width="1.2"/></g></svg><svg class="a" style="left:438px;top:572px" width="20" height="20" viewBox="438 572 20 20" fill="none" stroke-linecap="round" stroke-linejoin="round"><g transform="translate(448 582)"><path d="M-6.6 -7L-5.7 -7.6V-4.2M-6.8 -0.8Q-5.7 -1.8 -4.9 -1Q-4.6 -0.3 -6.8 1.8H-4.6M-6.8 5.3H-4.8L-5.8 6.3Q-4.6 6.5 -4.8 7.2Q-5.2 8 -6.8 7.5" stroke="#5ab4e8" stroke-width="0.8" /><path d="M-1.4 -5.5H7.6M-1.4 0.5H7.6M-1.4 6.5H7.6" stroke="#222" stroke-width="1.2" /></g></svg><svg class="a" style="left:466px;top:572px" width="20" height="20" viewBox="466 572 20 20" fill="none" stroke-linecap="round" stroke-linejoin="round"><g transform="translate(476 582)"><path d="M-7.6 -6.5H7.8M-7.6 -2.5H7.8M-7.6 1.5H-2M-7.6 5.5H-2" stroke="#222" stroke-width="1.2" /><path d="M4.4 0.2V6.8M1.1 3.5H7.7" stroke="#5ab4e8" stroke-width="1.2" /></g></svg><svg class="a" style="left:498px;top:572px" width="20" height="20" viewBox="498 572 20 20" fill="none" stroke-linecap="round" stroke-linejoin="round"><g transform="translate(508 582)"><path d="M-1.5 -4.8H-5.5a2 2 0 0 0-2 2V7H2.5a2 2 0 0 0 2-2V1.8" stroke="#444" stroke-width="1.4" /><path d="M-0.2 0.1L7.3 -7.3M3 -7.4H7.4V-3" stroke="#5ab4e8" stroke-width="1.3" /></g></svg><svg class="a" style="left:530px;top:572px" width="20" height="20" viewBox="530 572 20 20" fill="none" stroke-linecap="round" stroke-linejoin="round"><g transform="translate(540 582)"><path d="M-7.8 4.4V-4.8H2M-0.5 -7.3L2 -4.8L-0.5 -2.3" stroke="#222" stroke-width="1.3" /><path d="M5.4 -4.8H7.6V4.4H-2.3M0.2 1.9L-2.3 4.4L0.2 6.9" stroke="#5ab4e8" stroke-width="1.3" /></g></svg><div class="cbc" style="left:1372px;top:575px"><svg width="13" height="13" viewBox="0 0 13 13" style="position:absolute;left:0;top:0"><path d="M3 6.8l2.4 2.4L10 4.2" stroke="#fff" stroke-width="1.8" fill="none" stroke-linecap="round" stroke-linejoin="round"/></svg></div><div class="t" style="left:1387px;top:575px;">Открыт (F6)</div><div class="a" style="left:1454px;top:571px;width:75px;height:22px;background:#fff;border:1px solid #c6c6c6;border-radius:4px"></div><div class="t" style="left:1292.0px;top:575px;width:400px;text-align:center;">Закрыть</div><div class="a" style="left:1532px;top:571px;width:104px;height:22px;background:#fff;border:1px solid #c6c6c6;border-radius:4px"></div><div class="t" style="left:1393.0px;top:575px;width:400px;text-align:center;">Добавить</div><svg class="a" style="left:1546px;top:574px" width="16" height="16" viewBox="1546 574 16 16" fill="none" stroke-linecap="round" stroke-linejoin="round"><path d="M1554 576.5V587.5M1548.5 582H1559.5" stroke="#222" stroke-width="1.3" /></svg><div class="a" style="left:1638px;top:571px;width:129px;height:22px;background:#fff;border:1px solid #c6c6c6;border-radius:4px"></div><div class="t" style="left:1512.0px;top:575px;width:400px;text-align:center;">Редактировать</div><svg class="a" style="left:1650px;top:573px" width="18" height="18" viewBox="1650 573 18 18" fill="none" stroke-linecap="round" stroke-linejoin="round"><path d="M1654.2 586.2L1655 582.4L1661.6 575.8L1664.6 578.8L1658 585.4z M1660.2 577.2L1663.2 580.2" stroke="#333" stroke-width="1.2" /><path d="M1653.5 589H1665" stroke="#5ab4e8" stroke-width="1.1" /></svg><div class="a" style="left:1771px;top:571px;width:92px;height:22px;background:#fff;border:1px solid #c6c6c6;border-radius:4px"></div><div class="t" style="left:1626.0px;top:575px;width:400px;text-align:center;">Удалить</div><div class="a" style="left:1787px;top:581px;width:10px;height:2px;background:#777"></div><div class="a" style="left:280px;top:618px;width:1585px;height:1px;background:#cfcfcf"></div><div class="a" style="left:283px;top:597px;width:104px;height:22px;background:#d5e3e8;border:1px solid #d3d3d3;border-bottom:none;border-radius:4px 4px 0 0"></div><div class="t" style="left:135.0px;top:601px;width:400px;text-align:center;color:#222">Спецификация</div><div class="a" style="left:390px;top:597px;width:68px;height:22px;background:#f2f2f2;border:1px solid #d3d3d3;border-bottom:none;border-radius:4px 4px 0 0"></div><div class="t" style="left:224.0px;top:601px;width:400px;text-align:center;color:#222">История</div><div class="a" style="left:462px;top:597px;width:118px;height:22px;background:#f2f2f2;border:1px solid #d3d3d3;border-bottom:none;border-radius:4px 4px 0 0"></div><div class="t" style="left:321.0px;top:601px;width:400px;text-align:center;color:#222">Печатные формы</div><div class="a" style="left:584px;top:597px;width:72px;height:22px;background:#f2f2f2;border:1px solid #d3d3d3;border-bottom:none;border-radius:4px 4px 0 0"></div><div class="t" style="left:420.0px;top:601px;width:400px;text-align:center;color:#222">Действия</div><div class="a" style="left:660px;top:597px;width:210px;height:22px;background:#f2f2f2;border:1px solid #d3d3d3;border-bottom:none;border-radius:4px 4px 0 0"></div><div class="t" style="left:565.0px;top:601px;width:400px;text-align:center;color:#222">Ошибки загрузки в оборудование</div><div class="a" style="left:282px;top:623px;width:1581px;height:275px;background:#fff;border:1px solid #c9c9c9;border-radius:4px"></div><div class="a" style="left:283px;top:624px;width:1579px;height:55px;background:#f2f2f2"></div><div class="a" style="left:283px;top:678px;width:1579px;height:1px;background:#e2e2e2"></div><div class="t" style="left:282px;top:636.0px;width:59px;text-align:center;overflow:hidden;color:#222">Номер</div><div class="t" style="left:282px;top:652.0px;width:59px;text-align:center;overflow:hidden;color:#222">строки</div><div class="t" style="left:341px;top:644.0px;width:105px;text-align:center;overflow:hidden;color:#222">Штрихкод</div><div class="t" style="left:446px;top:644.0px;width:202px;text-align:center;overflow:hidden;color:#222">Наименование</div><div class="t" style="left:648px;top:628.0px;width:26px;text-align:center;overflow:hidden;color:#222">Ед.</div><div class="t" style="left:648px;top:644.0px;width:26px;text-align:center;overflow:hidden;color:#222">изм</div><div class="t" style="left:648px;top:660.0px;width:26px;text-align:center;overflow:hidden;color:#222">.</div><div class="t" style="left:674px;top:644.0px;width:138px;text-align:center;overflow:hidden;color:#222">Партия</div><div class="t" style="left:812px;top:644.0px;width:52px;text-align:center;overflow:hidden;color:#222">Кол-во</div><div class="t" style="left:864px;top:628.0px;width:52px;text-align:center;overflow:hidden;color:#222">Цена</div><div class="t" style="left:864px;top:644.0px;width:52px;text-align:center;overflow:hidden;color:#222">поставщ</div><div class="t" style="left:864px;top:660.0px;width:52px;text-align:center;overflow:hidden;color:#222">ика до</div><div class="t" style="left:916px;top:628.0px;width:65px;text-align:center;overflow:hidden;color:#222">Сумма</div><div class="t" style="left:916px;top:644.0px;width:65px;text-align:center;overflow:hidden;color:#222">поставщик</div><div class="t" style="left:916px;top:660.0px;width:65px;text-align:center;overflow:hidden;color:#222">а до</div><div class="t" style="left:981px;top:636.0px;width:60px;text-align:center;overflow:hidden;color:#222">Надбавка</div><div class="t" style="left:981px;top:652.0px;width:60px;text-align:center;overflow:hidden;color:#222">,% до</div><div class="t" style="left:1041px;top:628.0px;width:60px;text-align:center;overflow:hidden;color:#222">Сумма</div><div class="t" style="left:1041px;top:644.0px;width:60px;text-align:center;overflow:hidden;color:#222">надбавки</div><div class="t" style="left:1041px;top:660.0px;width:60px;text-align:center;overflow:hidden;color:#222">до</div><div class="t" style="left:1101px;top:625.0px;width:33px;text-align:center;overflow:hidden;color:#222">НДС,</div><div class="t" style="left:1101px;top:641.0px;width:33px;text-align:center;overflow:hidden;color:#222">ном</div><div class="t" style="left:1101px;top:657.0px;width:33px;text-align:center;overflow:hidden;color:#222">ер</div><div class="t" style="left:1134px;top:636.0px;width:53px;text-align:center;overflow:hidden;color:#222">НДС, %</div><div class="t" style="left:1134px;top:652.0px;width:53px;text-align:center;overflow:hidden;color:#222">до</div><div class="t" style="left:1187px;top:636.0px;width:58px;text-align:center;overflow:hidden;color:#222">Сумма</div><div class="t" style="left:1187px;top:652.0px;width:58px;text-align:center;overflow:hidden;color:#222">НДС до</div><div class="t" style="left:1245px;top:628.0px;width:53px;text-align:center;overflow:hidden;color:#222">Цена</div><div class="t" style="left:1245px;top:644.0px;width:53px;text-align:center;overflow:hidden;color:#222">розничн</div><div class="t" style="left:1245px;top:660.0px;width:53px;text-align:center;overflow:hidden;color:#222">ая до</div><div class="t" style="left:1298px;top:628.0px;width:66px;text-align:center;overflow:hidden;color:#222">Сумма</div><div class="t" style="left:1298px;top:644.0px;width:66px;text-align:center;overflow:hidden;color:#222">розничная</div><div class="t" style="left:1298px;top:660.0px;width:66px;text-align:center;overflow:hidden;color:#222">до</div><div class="t" style="left:1364px;top:625.0px;width:51px;text-align:center;overflow:hidden;color:#222">Цена</div><div class="t" style="left:1364px;top:641.0px;width:51px;text-align:center;overflow:hidden;color:#222">поставщ</div><div class="t" style="left:1364px;top:657.0px;width:51px;text-align:center;overflow:hidden;color:#222">ика</div><div class="t" style="left:1415px;top:628.0px;width:66px;text-align:center;overflow:hidden;color:#222">Сумма</div><div class="t" style="left:1415px;top:644.0px;width:66px;text-align:center;overflow:hidden;color:#222">поставщик</div><div class="t" style="left:1415px;top:660.0px;width:66px;text-align:center;overflow:hidden;color:#222">а после</div><div class="t" style="left:1481px;top:636.0px;width:60px;text-align:center;overflow:hidden;color:#222">Надбавка</div><div class="t" style="left:1481px;top:652.0px;width:60px;text-align:center;overflow:hidden;color:#222">,% после</div><div class="t" style="left:1541px;top:628.0px;width:59px;text-align:center;overflow:hidden;color:#222">Сумма</div><div class="t" style="left:1541px;top:644.0px;width:59px;text-align:center;overflow:hidden;color:#222">надбавки</div><div class="t" style="left:1541px;top:660.0px;width:59px;text-align:center;overflow:hidden;color:#222">после</div><div class="t" style="left:1600px;top:625.0px;width:32px;text-align:center;overflow:hidden;color:#222">НДС,</div><div class="t" style="left:1600px;top:641.0px;width:32px;text-align:center;overflow:hidden;color:#222">ном</div><div class="t" style="left:1600px;top:657.0px;width:32px;text-align:center;overflow:hidden;color:#222">ер</div><div class="t" style="left:1632px;top:636.0px;width:53px;text-align:center;overflow:hidden;color:#222">НДС, %</div><div class="t" style="left:1632px;top:652.0px;width:53px;text-align:center;overflow:hidden;color:#222">после</div><div class="t" style="left:1685px;top:628.0px;width:59px;text-align:center;overflow:hidden;color:#222">Сумма</div><div class="t" style="left:1685px;top:644.0px;width:59px;text-align:center;overflow:hidden;color:#222">НДС</div><div class="t" style="left:1685px;top:660.0px;width:59px;text-align:center;overflow:hidden;color:#222">после</div><div class="t" style="left:1744px;top:625.0px;width:52px;text-align:center;overflow:hidden;color:#222">Цена</div><div class="t" style="left:1744px;top:641.0px;width:52px;text-align:center;overflow:hidden;color:#222">розничн</div><div class="t" style="left:1744px;top:657.0px;width:52px;text-align:center;overflow:hidden;color:#222">ая</div><div class="t" style="left:1796px;top:628.0px;width:66px;text-align:center;overflow:hidden;color:#222">Сумма</div><div class="t" style="left:1796px;top:644.0px;width:66px;text-align:center;overflow:hidden;color:#222">розничная</div><div class="t" style="left:1796px;top:660.0px;width:66px;text-align:center;overflow:hidden;color:#222">после</div><div class="a" style="left:283px;top:679px;width:1579px;height:20px;background:#d5e3e8"></div><div class="a" style="left:283px;top:699px;width:1579px;height:1px;background:#e2e2e2"></div><div class="c r" style="left:283px;top:679px;width:58px;height:20px;line-height:22px;">1</div><div class="c" style="left:342px;top:679px;width:104px;height:20px;line-height:22px;">4605246003530</div><div class="c" style="left:447px;top:679px;width:201px;height:20px;line-height:22px;letter-spacing:-0.15px">ЧАЙ ГРИНФИЛД КЛАССИК БРЕКФАСТ 25П</div><div class="c" style="left:649px;top:679px;width:25px;height:20px;line-height:22px;padding:0 0 0 3px">пор</div><div class="c r" style="left:813px;top:679px;width:51px;height:20px;line-height:22px;">9</div><div class="c r" style="left:865px;top:679px;width:51px;height:20px;line-height:22px;">2,93</div><div class="c r" style="left:917px;top:679px;width:64px;height:20px;line-height:22px;">26,37</div><div class="c r" style="left:982px;top:679px;width:59px;height:20px;line-height:22px;">40,78</div><div class="c r" style="left:1042px;top:679px;width:59px;height:20px;line-height:22px;">10,75</div><div class="c r" style="left:1102px;top:679px;width:32px;height:20px;line-height:22px;">5</div><div class="c r" style="left:1135px;top:679px;width:52px;height:20px;line-height:22px;">20</div><div class="c r" style="left:1188px;top:679px;width:57px;height:20px;line-height:22px;">7,43</div><div class="c r" style="left:1246px;top:679px;width:52px;height:20px;line-height:22px;">4,95</div><div class="c r" style="left:1299px;top:679px;width:65px;height:20px;line-height:22px;">44,55</div><div class="c r" style="left:1365px;top:679px;width:50px;height:20px;line-height:22px;">2,93</div><div class="c r" style="left:1416px;top:679px;width:65px;height:20px;line-height:22px;">26,37</div><div class="c r" style="left:1482px;top:679px;width:59px;height:20px;line-height:22px;">-71,84</div><div class="c r" style="left:1542px;top:679px;width:58px;height:20px;line-height:22px;">-18,95</div><div class="c r" style="left:1601px;top:679px;width:31px;height:20px;line-height:22px;">5</div><div class="c r" style="left:1633px;top:679px;width:52px;height:20px;line-height:22px;">20</div><div class="c r" style="left:1686px;top:679px;width:58px;height:20px;line-height:22px;">1,49</div><div class="c r" style="left:1745px;top:679px;width:51px;height:20px;line-height:22px;">0,99</div><div class="c r" style="left:1797px;top:679px;width:65px;height:20px;line-height:22px;">8,91</div><div class="a" style="left:283px;top:720px;width:1579px;height:1px;background:#e2e2e2"></div><div class="c r" style="left:283px;top:700px;width:58px;height:20px;line-height:22px;">2</div><div class="c" style="left:342px;top:700px;width:104px;height:20px;line-height:22px;">80177609</div><div class="c" style="left:447px;top:700px;width:201px;height:20px;line-height:22px;letter-spacing:-0.15px">ШОКОЛАД КИНДЕР МОЛОЧНЫЙ 50Г</div><div class="c" style="left:649px;top:700px;width:25px;height:20px;line-height:22px;padding:0 0 0 3px">пор</div><div class="c r" style="left:813px;top:700px;width:51px;height:20px;line-height:22px;">227</div><div class="c r" style="left:865px;top:700px;width:51px;height:20px;line-height:22px;">0,98</div><div class="c r" style="left:917px;top:700px;width:64px;height:20px;line-height:22px;">222,46</div><div class="c r" style="left:982px;top:700px;width:59px;height:20px;line-height:22px;">43,71</div><div class="c r" style="left:1042px;top:700px;width:59px;height:20px;line-height:22px;">97,23</div><div class="c r" style="left:1102px;top:700px;width:32px;height:20px;line-height:22px;">5</div><div class="c r" style="left:1135px;top:700px;width:52px;height:20px;line-height:22px;">20</div><div class="c r" style="left:1188px;top:700px;width:57px;height:20px;line-height:22px;">63,94</div><div class="c r" style="left:1246px;top:700px;width:52px;height:20px;line-height:22px;">1,69</div><div class="c r" style="left:1299px;top:700px;width:65px;height:20px;line-height:22px;">383,63</div><div class="c r" style="left:1365px;top:700px;width:50px;height:20px;line-height:22px;">0,98</div><div class="c r" style="left:1416px;top:700px;width:65px;height:20px;line-height:22px;">222,46</div><div class="c r" style="left:1482px;top:700px;width:59px;height:20px;line-height:22px;">-15,82</div><div class="c r" style="left:1542px;top:700px;width:58px;height:20px;line-height:22px;">-35,19</div><div class="c r" style="left:1601px;top:700px;width:31px;height:20px;line-height:22px;">5</div><div class="c r" style="left:1633px;top:700px;width:52px;height:20px;line-height:22px;">20</div><div class="c r" style="left:1686px;top:700px;width:58px;height:20px;line-height:22px;">37,46</div><div class="c r" style="left:1745px;top:700px;width:51px;height:20px;line-height:22px;">0,99</div><div class="c r" style="left:1797px;top:700px;width:65px;height:20px;line-height:22px;">224,73</div><div class="a" style="left:283px;top:741px;width:1579px;height:1px;background:#e2e2e2"></div><div class="c r" style="left:283px;top:721px;width:58px;height:20px;line-height:22px;">3</div><div class="c" style="left:342px;top:721px;width:104px;height:20px;line-height:22px;">4810206003394</div><div class="c" style="left:447px;top:721px;width:201px;height:20px;line-height:22px;letter-spacing:-0.15px">МОРОЖЕНОЕ КАПРИЗ ВАНИЛЬ 95Г</div><div class="c" style="left:649px;top:721px;width:25px;height:20px;line-height:22px;padding:0 0 0 3px">пор</div><div class="c r" style="left:813px;top:721px;width:51px;height:20px;line-height:22px;">64</div><div class="c r" style="left:865px;top:721px;width:51px;height:20px;line-height:22px;">0,68</div><div class="c r" style="left:917px;top:721px;width:64px;height:20px;line-height:22px;">43,52</div><div class="c r" style="left:982px;top:721px;width:59px;height:20px;line-height:22px;">53,19</div><div class="c r" style="left:1042px;top:721px;width:59px;height:20px;line-height:22px;">23,15</div><div class="c r" style="left:1102px;top:721px;width:32px;height:20px;line-height:22px;">5</div><div class="c r" style="left:1135px;top:721px;width:52px;height:20px;line-height:22px;">20</div><div class="c r" style="left:1188px;top:721px;width:57px;height:20px;line-height:22px;">13,33</div><div class="c r" style="left:1246px;top:721px;width:52px;height:20px;line-height:22px;">1,25</div><div class="c r" style="left:1299px;top:721px;width:65px;height:20px;line-height:22px;">80</div><div class="c r" style="left:1365px;top:721px;width:50px;height:20px;line-height:22px;">0,68</div><div class="c r" style="left:1416px;top:721px;width:65px;height:20px;line-height:22px;">43,52</div><div class="c r" style="left:1482px;top:721px;width:59px;height:20px;line-height:22px;">45,83</div><div class="c r" style="left:1542px;top:721px;width:58px;height:20px;line-height:22px;">19,95</div><div class="c r" style="left:1601px;top:721px;width:31px;height:20px;line-height:22px;">5</div><div class="c r" style="left:1633px;top:721px;width:52px;height:20px;line-height:22px;">20</div><div class="c r" style="left:1686px;top:721px;width:58px;height:20px;line-height:22px;">12,69</div><div class="c r" style="left:1745px;top:721px;width:51px;height:20px;line-height:22px;">1,19</div><div class="c r" style="left:1797px;top:721px;width:65px;height:20px;line-height:22px;">76,16</div><div class="a" style="left:283px;top:762px;width:1579px;height:1px;background:#e2e2e2"></div><div class="c r" style="left:283px;top:742px;width:58px;height:20px;line-height:22px;">4</div><div class="c" style="left:342px;top:742px;width:104px;height:20px;line-height:22px;">4810168037208</div><div class="c" style="left:447px;top:742px;width:201px;height:20px;line-height:22px;letter-spacing:-0.15px">МОРОЖЕНОЕ АЛЕНКА 65Г РБ ЮККИ</div><div class="c" style="left:649px;top:742px;width:25px;height:20px;line-height:22px;padding:0 0 0 3px">пор</div><div class="c r" style="left:813px;top:742px;width:51px;height:20px;line-height:22px;">27</div><div class="c r" style="left:865px;top:742px;width:51px;height:20px;line-height:22px;">0,49</div><div class="c r" style="left:917px;top:742px;width:64px;height:20px;line-height:22px;">13,23</div><div class="c r" style="left:982px;top:742px;width:59px;height:20px;line-height:22px;">51,36</div><div class="c r" style="left:1042px;top:742px;width:59px;height:20px;line-height:22px;">6,79</div><div class="c r" style="left:1102px;top:742px;width:32px;height:20px;line-height:22px;">5</div><div class="c r" style="left:1135px;top:742px;width:52px;height:20px;line-height:22px;">20</div><div class="c r" style="left:1188px;top:742px;width:57px;height:20px;line-height:22px;">4,01</div><div class="c r" style="left:1246px;top:742px;width:52px;height:20px;line-height:22px;">0,89</div><div class="c r" style="left:1299px;top:742px;width:65px;height:20px;line-height:22px;">24,03</div><div class="c r" style="left:1365px;top:742px;width:50px;height:20px;line-height:22px;">0,49</div><div class="c r" style="left:1416px;top:742px;width:65px;height:20px;line-height:22px;">13,23</div><div class="c r" style="left:1482px;top:742px;width:59px;height:20px;line-height:22px;">102,38</div><div class="c r" style="left:1542px;top:742px;width:58px;height:20px;line-height:22px;">13,54</div><div class="c r" style="left:1601px;top:742px;width:31px;height:20px;line-height:22px;">5</div><div class="c r" style="left:1633px;top:742px;width:52px;height:20px;line-height:22px;">20</div><div class="c r" style="left:1686px;top:742px;width:58px;height:20px;line-height:22px;">5,36</div><div class="c r" style="left:1745px;top:742px;width:51px;height:20px;line-height:22px;">1,19</div><div class="c r" style="left:1797px;top:742px;width:65px;height:20px;line-height:22px;">32,13</div><div class="a" style="left:283px;top:783px;width:1579px;height:1px;background:#e2e2e2"></div><div class="c r" style="left:283px;top:763px;width:58px;height:20px;line-height:22px;">5</div><div class="c" style="left:342px;top:763px;width:104px;height:20px;line-height:22px;">4607807010285</div><div class="c" style="left:447px;top:763px;width:201px;height:20px;line-height:22px;letter-spacing:-0.15px">ЧАЙ ХЭЙЛИС КРЕПКИЙ СЛОН ЧЕРНЫЙ</div><div class="c" style="left:649px;top:763px;width:25px;height:20px;line-height:22px;padding:0 0 0 3px">пор</div><div class="c r" style="left:813px;top:763px;width:51px;height:20px;line-height:22px;">9</div><div class="c r" style="left:865px;top:763px;width:51px;height:20px;line-height:22px;">1,91</div><div class="c r" style="left:917px;top:763px;width:64px;height:20px;line-height:22px;">17,19</div><div class="c r" style="left:982px;top:763px;width:59px;height:20px;line-height:22px;">50,52</div><div class="c r" style="left:1042px;top:763px;width:59px;height:20px;line-height:22px;">8,68</div><div class="c r" style="left:1102px;top:763px;width:32px;height:20px;line-height:22px;">5</div><div class="c r" style="left:1135px;top:763px;width:52px;height:20px;line-height:22px;">20</div><div class="c r" style="left:1188px;top:763px;width:57px;height:20px;line-height:22px;">5,18</div><div class="c r" style="left:1246px;top:763px;width:52px;height:20px;line-height:22px;">3,45</div><div class="c r" style="left:1299px;top:763px;width:65px;height:20px;line-height:22px;">31,05</div><div class="c r" style="left:1365px;top:763px;width:50px;height:20px;line-height:22px;">1,91</div><div class="c r" style="left:1416px;top:763px;width:65px;height:20px;line-height:22px;">17,19</div><div class="c r" style="left:1482px;top:763px;width:59px;height:20px;line-height:22px;">72,34</div><div class="c r" style="left:1542px;top:763px;width:58px;height:20px;line-height:22px;">12,43</div><div class="c r" style="left:1601px;top:763px;width:31px;height:20px;line-height:22px;">5</div><div class="c r" style="left:1633px;top:763px;width:52px;height:20px;line-height:22px;">20</div><div class="c r" style="left:1686px;top:763px;width:58px;height:20px;line-height:22px;">5,93</div><div class="c r" style="left:1745px;top:763px;width:51px;height:20px;line-height:22px;">3,95</div><div class="c r" style="left:1797px;top:763px;width:65px;height:20px;line-height:22px;">35,55</div><div class="a" style="left:283px;top:804px;width:1579px;height:1px;background:#e2e2e2"></div><div class="c r" style="left:283px;top:784px;width:58px;height:20px;line-height:22px;">6</div><div class="c" style="left:342px;top:784px;width:104px;height:20px;line-height:22px;">4607807010209</div><div class="c" style="left:447px;top:784px;width:201px;height:20px;line-height:22px;letter-spacing:-0.15px">ЧАЙ ХЭЙЛИС КОРОЛЕВ.СЛОН ЧЕРНЫЙ</div><div class="c" style="left:649px;top:784px;width:25px;height:20px;line-height:22px;padding:0 0 0 3px">пор</div><div class="c r" style="left:813px;top:784px;width:51px;height:20px;line-height:22px;">4</div><div class="c r" style="left:865px;top:784px;width:51px;height:20px;line-height:22px;">1,82</div><div class="c r" style="left:917px;top:784px;width:64px;height:20px;line-height:22px;">7,28</div><div class="c r" style="left:982px;top:784px;width:59px;height:20px;line-height:22px;">41,48</div><div class="c r" style="left:1042px;top:784px;width:59px;height:20px;line-height:22px;">3,02</div><div class="c r" style="left:1102px;top:784px;width:32px;height:20px;line-height:22px;">5</div><div class="c r" style="left:1135px;top:784px;width:52px;height:20px;line-height:22px;">20</div><div class="c r" style="left:1188px;top:784px;width:57px;height:20px;line-height:22px;">2,06</div><div class="c r" style="left:1246px;top:784px;width:52px;height:20px;line-height:22px;">3,09</div><div class="c r" style="left:1299px;top:784px;width:65px;height:20px;line-height:22px;">12,36</div><div class="c r" style="left:1365px;top:784px;width:50px;height:20px;line-height:22px;">1,82</div><div class="c r" style="left:1416px;top:784px;width:65px;height:20px;line-height:22px;">7,28</div><div class="c r" style="left:1482px;top:784px;width:59px;height:20px;line-height:22px;">80,86</div><div class="c r" style="left:1542px;top:784px;width:58px;height:20px;line-height:22px;">5,89</div><div class="c r" style="left:1601px;top:784px;width:31px;height:20px;line-height:22px;">5</div><div class="c r" style="left:1633px;top:784px;width:52px;height:20px;line-height:22px;">20</div><div class="c r" style="left:1686px;top:784px;width:58px;height:20px;line-height:22px;">2,63</div><div class="c r" style="left:1745px;top:784px;width:51px;height:20px;line-height:22px;">3,95</div><div class="c r" style="left:1797px;top:784px;width:65px;height:20px;line-height:22px;">15,8</div><div class="a" style="left:283px;top:825px;width:1579px;height:1px;background:#e2e2e2"></div><div class="c r" style="left:283px;top:805px;width:58px;height:20px;line-height:22px;">7</div><div class="c" style="left:342px;top:805px;width:104px;height:20px;line-height:22px;">4810206004735</div><div class="c" style="left:447px;top:805px;width:201px;height:20px;line-height:22px;letter-spacing:-0.15px">МОРОЖЕНОЕ КАПРИЗ ВАНИЛЬ С ШОКОЛАДОМ</div><div class="c" style="left:649px;top:805px;width:25px;height:20px;line-height:22px;padding:0 0 0 3px">пор</div><div class="c r" style="left:813px;top:805px;width:51px;height:20px;line-height:22px;">1</div><div class="c r" style="left:865px;top:805px;width:51px;height:20px;line-height:22px;">2,6</div><div class="c r" style="left:917px;top:805px;width:64px;height:20px;line-height:22px;">2,6</div><div class="c r" style="left:982px;top:805px;width:59px;height:20px;line-height:22px;">52,24</div><div class="c r" style="left:1042px;top:805px;width:59px;height:20px;line-height:22px;">1,36</div><div class="c r" style="left:1102px;top:805px;width:32px;height:20px;line-height:22px;">5</div><div class="c r" style="left:1135px;top:805px;width:52px;height:20px;line-height:22px;">20</div><div class="c r" style="left:1188px;top:805px;width:57px;height:20px;line-height:22px;">0,79</div><div class="c r" style="left:1246px;top:805px;width:52px;height:20px;line-height:22px;">4,75</div><div class="c r" style="left:1299px;top:805px;width:65px;height:20px;line-height:22px;">4,75</div><div class="c r" style="left:1365px;top:805px;width:50px;height:20px;line-height:22px;">2,6</div><div class="c r" style="left:1416px;top:805px;width:65px;height:20px;line-height:22px;">2,6</div><div class="c r" style="left:1482px;top:805px;width:59px;height:20px;line-height:22px;">-61,86</div><div class="c r" style="left:1542px;top:805px;width:58px;height:20px;line-height:22px;">-1,61</div><div class="c r" style="left:1601px;top:805px;width:31px;height:20px;line-height:22px;">5</div><div class="c r" style="left:1633px;top:805px;width:52px;height:20px;line-height:22px;">20</div><div class="c r" style="left:1686px;top:805px;width:58px;height:20px;line-height:22px;">0,2</div><div class="c r" style="left:1745px;top:805px;width:51px;height:20px;line-height:22px;">1,19</div><div class="c r" style="left:1797px;top:805px;width:65px;height:20px;line-height:22px;">1,19</div><div class="a" style="left:341px;top:624px;width:1px;height:202px;background:#e2e2e2"></div><div class="a" style="left:446px;top:624px;width:1px;height:202px;background:#e2e2e2"></div><div class="a" style="left:648px;top:624px;width:1px;height:202px;background:#e2e2e2"></div><div class="a" style="left:674px;top:624px;width:1px;height:202px;background:#e2e2e2"></div><div class="a" style="left:812px;top:624px;width:1px;height:202px;background:#e2e2e2"></div><div class="a" style="left:864px;top:624px;width:1px;height:202px;background:#e2e2e2"></div><div class="a" style="left:916px;top:624px;width:1px;height:202px;background:#e2e2e2"></div><div class="a" style="left:981px;top:624px;width:1px;height:202px;background:#e2e2e2"></div><div class="a" style="left:1041px;top:624px;width:1px;height:202px;background:#e2e2e2"></div><div class="a" style="left:1101px;top:624px;width:1px;height:202px;background:#e2e2e2"></div><div class="a" style="left:1134px;top:624px;width:1px;height:202px;background:#e2e2e2"></div><div class="a" style="left:1187px;top:624px;width:1px;height:202px;background:#e2e2e2"></div><div class="a" style="left:1245px;top:624px;width:1px;height:202px;background:#e2e2e2"></div><div class="a" style="left:1298px;top:624px;width:1px;height:202px;background:#e2e2e2"></div><div class="a" style="left:1364px;top:624px;width:1px;height:202px;background:#e2e2e2"></div><div class="a" style="left:1415px;top:624px;width:1px;height:202px;background:#e2e2e2"></div><div class="a" style="left:1481px;top:624px;width:1px;height:202px;background:#e2e2e2"></div><div class="a" style="left:1541px;top:624px;width:1px;height:202px;background:#e2e2e2"></div><div class="a" style="left:1600px;top:624px;width:1px;height:202px;background:#e2e2e2"></div><div class="a" style="left:1632px;top:624px;width:1px;height:202px;background:#e2e2e2"></div><div class="a" style="left:1685px;top:624px;width:1px;height:202px;background:#e2e2e2"></div><div class="a" style="left:1744px;top:624px;width:1px;height:202px;background:#e2e2e2"></div><div class="a" style="left:1796px;top:624px;width:1px;height:202px;background:#e2e2e2"></div><div class="a" style="left:282px;top:900px;width:28px;height:22px;background:#d5e3e8;border-radius:5px"></div><svg class="a" style="left:286px;top:901px" width="20" height="20" viewBox="286 901 20 20" fill="none" stroke-linecap="round" stroke-linejoin="round"><g transform="translate(296 911)"><circle cx="-6" cy="-4.5" r="1.5" stroke="#5ab4e8" stroke-width="1"/><circle cx="-6" cy="0.5" r="1.5" stroke="#5ab4e8" stroke-width="1"/><circle cx="-6" cy="5.5" r="1.5" stroke="#5ab4e8" stroke-width="1"/><path d="M-1.4 -4.5H7.4M-1.4 0.5H7.4M-1.4 5.5H7.4" stroke="#222" stroke-width="1.2" /></g></svg><svg class="a" style="left:314px;top:901px" width="20" height="20" viewBox="314 901 20 20" fill="none" stroke-linecap="round" stroke-linejoin="round"><g transform="translate(324 911)"><path d="M-2.4 -7.5V7.3M2.5 -7.5V7.3M-7.4 -2.5H7.4M-7.4 2.5H7.4" stroke="#5ab4e8" stroke-width="1.1" /><rect x="-7.8" y="-7.9" width="15.6" height="15.4" rx="1.3" stroke="#222" stroke-width="1.3"/></g></svg><svg class="a" style="left:346px;top:901px" width="20" height="20" viewBox="346 901 20 20" fill="none" stroke-linecap="round" stroke-linejoin="round"><g transform="translate(356 911)"><path d="M-7.5 -5.5H7.6M-3.2 2.5H3.3" stroke="#222" stroke-width="1.2" /><path d="M-5.6 -1.5H5.6M-1.2 6.5H1.5" stroke="#5ab4e8" stroke-width="1.1" /></g></svg><svg class="a" style="left:378px;top:901px" width="20" height="20" viewBox="378 901 20 20" fill="none" stroke-linecap="round" stroke-linejoin="round"><g transform="translate(388 911)"><path d="M5.47 -1.22L7.54 -0.99L7.54 0.99L5.47 1.22L4.73 3.00L6.03 4.63L4.63 6.03L3.00 4.73L1.22 5.47L0.99 7.54L-0.99 7.54L-1.22 5.47L-3.00 4.73L-4.63 6.03L-6.03 4.63L-4.73 3.00L-5.47 1.22L-7.54 0.99L-7.54 -0.99L-5.47 -1.22L-4.73 -3.00L-6.03 -4.63L-4.63 -6.03L-3.00 -4.73L-1.22 -5.47L-0.99 -7.54L0.99 -7.54L1.22 -5.47L3.00 -4.73L4.63 -6.03L6.03 -4.63L4.73 -3.00z" stroke="#222" stroke-width="1.2" /><circle cx="0" cy="0" r="2.5" stroke="#5ab4e8" stroke-width="1.2"/></g></svg><svg class="a" style="left:410px;top:901px" width="20" height="20" viewBox="410 901 20 20" fill="none" stroke-linecap="round" stroke-linejoin="round"><g transform="translate(420 911)"><path d="M-6.6 -7L-5.7 -7.6V-4.2M-6.8 -0.8Q-5.7 -1.8 -4.9 -1Q-4.6 -0.3 -6.8 1.8H-4.6M-6.8 5.3H-4.8L-5.8 6.3Q-4.6 6.5 -4.8 7.2Q-5.2 8 -6.8 7.5" stroke="#5ab4e8" stroke-width="0.8" /><path d="M-1.4 -5.5H7.6M-1.4 0.5H7.6M-1.4 6.5H7.6" stroke="#222" stroke-width="1.2" /></g></svg><svg class="a" style="left:438px;top:901px" width="20" height="20" viewBox="438 901 20 20" fill="none" stroke-linecap="round" stroke-linejoin="round"><g transform="translate(448 911)"><path d="M-7.6 -6.5H7.8M-7.6 -2.5H7.8M-7.6 1.5H-2M-7.6 5.5H-2" stroke="#222" stroke-width="1.2" /><path d="M4.4 0.2V6.8M1.1 3.5H7.7" stroke="#5ab4e8" stroke-width="1.2" /></g></svg><svg class="a" style="left:470px;top:901px" width="20" height="20" viewBox="470 901 20 20" fill="none" stroke-linecap="round" stroke-linejoin="round"><g transform="translate(480 911)"><path d="M-1.5 -4.8H-5.5a2 2 0 0 0-2 2V7H2.5a2 2 0 0 0 2-2V1.8" stroke="#444" stroke-width="1.4" /><path d="M-0.2 0.1L7.3 -7.3M3 -7.4H7.4V-3" stroke="#5ab4e8" stroke-width="1.3" /></g></svg><svg class="a" style="left:501px;top:901px" width="20" height="20" viewBox="501 901 20 20" fill="none" stroke-linecap="round" stroke-linejoin="round"><g transform="translate(511 911)"><path d="M-7.8 4.4V-4.8H2M-0.5 -7.3L2 -4.8L-0.5 -2.3" stroke="#222" stroke-width="1.3" /><path d="M5.4 -4.8H7.6V4.4H-2.3M0.2 1.9L-2.3 4.4L0.2 6.9" stroke="#5ab4e8" stroke-width="1.3" /></g></svg><div class="a" style="left:280px;top:924px;width:1585px;height:1px;background:#d3d3d3"></div><div class="cb" style="left:282px;top:934px"></div><div class="t" style="left:299px;top:933px;">Включить корректировку на форме</div><div class="a" style="left:1440px;top:929px;width:41px;height:22px;background:#fff;border:1px solid #c6c6c6;border-radius:4px"></div><svg class="a" style="left:1452px;top:930px" width="18" height="20" viewBox="1452 930 18 20" fill="none" stroke-linecap="round" stroke-linejoin="round"><path d="M1455.6 938.5A5.8 5.8 0 0 1 1466 936.2M1466.4 932.8V936.6H1462.6" stroke="#333" stroke-width="1.3" /><path d="M1466.4 941.5A5.8 5.8 0 0 1 1456 943.8M1455.6 947.2V943.4H1459.4" stroke="#5ab4e8" stroke-width="1.3" /></svg><div class="a" style="left:1486px;top:929px;width:106px;height:22px;background:#fff;border:1px solid #c6c6c6;border-radius:4px"></div><div class="t" style="left:1348.0px;top:933px;width:400px;text-align:center;color:#8a8a8a">Сохранить</div><svg class="a" style="left:1498px;top:931px" width="18" height="18" viewBox="1498 931 18 18" fill="none" stroke-linecap="round" stroke-linejoin="round"><path d="M1502 934.5a1.5 1.5 0 0 1 1.5-1.5h6.5l3 3v8a1.5 1.5 0 0 1-1.5 1.5h-8a1.5 1.5 0 0 1-1.5-1.5z" stroke="#444" stroke-width="1.3" /><path d="M1503.5 945.5V941.5H1510.5V945.5" stroke="#5ab4e8" stroke-width="1.3" /></svg><div class="a" style="left:1596px;top:929px;width:102px;height:22px;background:#fff;border:1px solid #c6c6c6;border-radius:4px"></div><div class="t" style="left:1455.6px;top:933px;width:400px;text-align:center;color:#8a8a8a">Отменить</div><svg class="a" style="left:1608px;top:931px" width="18" height="18" viewBox="1608 931 18 18" fill="none" stroke-linecap="round" stroke-linejoin="round"><path d="M1612.5 937V945.5a1 1 0 0 0 1 1h5a1 1 0 0 0 1-1V937" stroke="#333" stroke-width="1.3" /><path d="M1611 935H1621M1614.5 935V933.2H1617.5V935" stroke="#5ab4e8" stroke-width="1.2" /></svg><div class="a" style="left:1702px;top:929px;width:64px;height:22px;background:#fff;border:1px solid #c6c6c6;border-radius:4px"></div><div class="t" style="left:1543.2px;top:933px;width:400px;text-align:center;">OK</div><svg class="a" style="left:1714px;top:932px" width="18" height="16" viewBox="1714 932 18 16" fill="none" stroke-linecap="round" stroke-linejoin="round"><path d="M1717.3 941.2L1720.5 944.5L1728.8 935.3" stroke="#222" stroke-width="1.3" /></svg><div class="a" style="left:1770px;top:929px;width:93px;height:22px;background:#fff;border:1px solid #c6c6c6;border-radius:4px"></div><div class="t" style="left:1625.0px;top:933px;width:400px;text-align:center;">Закрыть</div><svg class="a" style="left:1783px;top:933px" width="16" height="16" viewBox="1783 933 16 16" fill="none" stroke-linecap="round" stroke-linejoin="round"><path d="M1786.2 935.6L1795.6 945M1795.6 935.6L1786.2 945" stroke="#222" stroke-width="1.3" /></svg><div class="a" style="left:622px;top:0px;width:131px;height:59px;border:3px solid #ff0000"></div><div class="a" style="left:8px;top:738px;width:211px;height:32px;border:3px solid #ff0000"></div><div class="a" style="left:1532px;top:570px;width:104px;height:25px;border:3px solid #ff0000"></div><svg class="a" style="left:0;top:0" width="1871" height="954"><path d="M625 60L226 727" stroke="#ff0000" stroke-width="3.5" fill="none"/><path d="M220.5 736.5L223.5 719.5L233 726z" fill="#ff0000" stroke="#ff0000" stroke-width="1" stroke-linejoin="round"/></svg></body></html>
